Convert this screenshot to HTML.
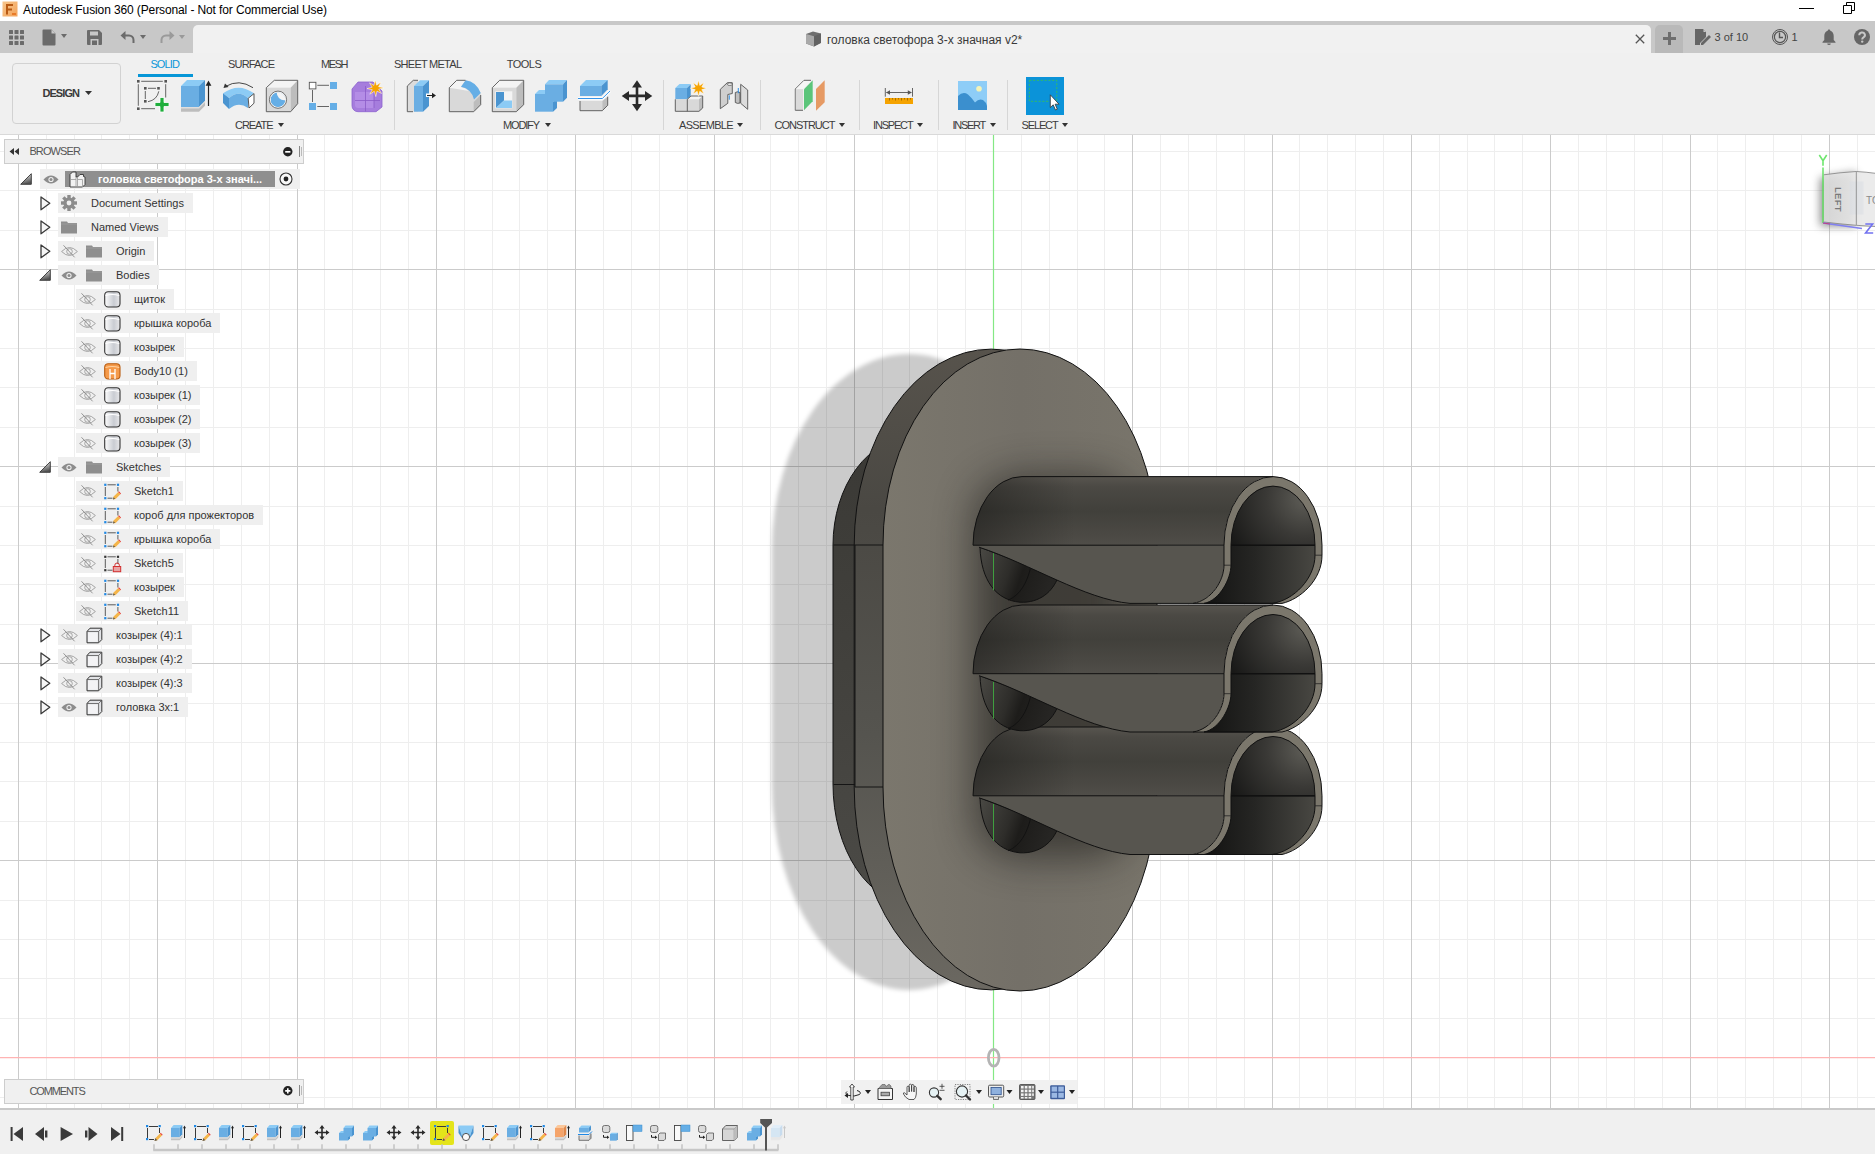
<!DOCTYPE html>
<html><head><meta charset="utf-8"><style>
html,body{margin:0;padding:0}
body{width:1875px;height:1154px;overflow:hidden;position:relative;font-family:"Liberation Sans",sans-serif;background:#fff}
.a{position:absolute}
.t{position:absolute;line-height:1;white-space:nowrap}
svg{position:absolute;overflow:visible}
</style></head><body>
<svg class="a" style="left:0;top:0" width="1875" height="1154" viewBox="0 0 1875 1154">
<path stroke="#eeeeee" stroke-width="1" fill="none" d="M46.5 134V1108 M74.5 134V1108 M101.5 134V1108 M129.5 134V1108 M185.5 134V1108 M213.5 134V1108 M241.5 134V1108 M269.5 134V1108 M324.5 134V1108 M352.5 134V1108 M380.5 134V1108 M408.5 134V1108 M464.5 134V1108 M492.5 134V1108 M519.5 134V1108 M547.5 134V1108 M603.5 134V1108 M631.5 134V1108 M659.5 134V1108 M687.5 134V1108 M742.5 134V1108 M770.5 134V1108 M798.5 134V1108 M826.5 134V1108 M882.5 134V1108 M909.5 134V1108 M937.5 134V1108 M965.5 134V1108 M1021.5 134V1108 M1049.5 134V1108 M1077.5 134V1108 M1104.5 134V1108 M1160.5 134V1108 M1188.5 134V1108 M1216.5 134V1108 M1244.5 134V1108 M1299.5 134V1108 M1327.5 134V1108 M1355.5 134V1108 M1383.5 134V1108 M1439.5 134V1108 M1467.5 134V1108 M1494.5 134V1108 M1522.5 134V1108 M1578.5 134V1108 M1606.5 134V1108 M1634.5 134V1108 M1662.5 134V1108 M1717.5 134V1108 M1745.5 134V1108 M1773.5 134V1108 M1801.5 134V1108 M1857.5 134V1108 M0 151.5H1875 M0 190.5H1875 M0 230.5H1875 M0 309.5H1875 M0 348.5H1875 M0 387.5H1875 M0 427.5H1875 M0 506.5H1875 M0 545.5H1875 M0 584.5H1875 M0 624.5H1875 M0 703.5H1875 M0 742.5H1875 M0 781.5H1875 M0 821.5H1875 M0 900.5H1875 M0 939.5H1875 M0 978.5H1875 M0 1018.5H1875 M0 1097.5H1875"/>
<path stroke="#cbcbcb" stroke-width="1" fill="none" d="M18.5 134V1108 M157.5 134V1108 M297.5 134V1108 M436.5 134V1108 M575.5 134V1108 M714.5 134V1108 M854.5 134V1108 M993.5 134V1108 M1132.5 134V1108 M1272.5 134V1108 M1411.5 134V1108 M1550.5 134V1108 M1690.5 134V1108 M1829.5 134V1108 M0 269.5H1875 M0 466.5H1875 M0 663.5H1875 M0 860.5H1875 M0 1057.5H1875"/>
</svg>
<!-- 10_axes.html -->
<svg class="a" style="left:0;top:0" width="1875" height="1154" viewBox="0 0 1875 1154">
<path d="M993.5 134V1108" stroke="#84e884" stroke-width="1.2" fill="none"/>
<path d="M0 1057.6H1875" stroke="#ffb3b3" stroke-width="1.3" fill="none"/>
<ellipse cx="993.7" cy="1057.7" rx="5.3" ry="8.4" fill="none" stroke="#b4b4b4" stroke-width="2.8"/>
</svg>
<!-- 20_model.py -->
<svg class="a" style="left:0;top:0" width="1875" height="1154" viewBox="0 0 1875 1154">
<defs>
<filter id="shb" x="-20%" y="-20%" width="140%" height="140%"><feGaussianBlur stdDeviation="2.2"/></filter>
<linearGradient id="bandg" x1="0" y1="349" x2="0" y2="991" gradientUnits="userSpaceOnUse">
 <stop offset="0" stop-color="#57534c"/><stop offset="0.25" stop-color="#4a4843"/><stop offset="0.6" stop-color="#55544f"/><stop offset="1" stop-color="#6b6861"/></linearGradient>
<linearGradient id="plateg" x1="0" y1="430" x2="0" y2="900" gradientUnits="userSpaceOnUse">
 <stop offset="0" stop-color="#3a3935"/><stop offset="0.5" stop-color="#42413d"/><stop offset="1" stop-color="#4b4a46"/></linearGradient>
<linearGradient id="faceg" x1="883" y1="0" x2="1157" y2="0" gradientUnits="userSpaceOnUse">
 <stop offset="0" stop-color="#7b776d"/><stop offset="0.5" stop-color="#747068"/><stop offset="1" stop-color="#79756b"/></linearGradient>
<radialGradient id="ao" cx="1030" cy="545" r="130" gradientUnits="userSpaceOnUse" gradientTransform="translate(1030 670) scale(0.75 1.45) translate(-1030 -670)">
 <stop offset="0" stop-color="#2a2925" stop-opacity="0.75"/><stop offset="0.55" stop-color="#2a2925" stop-opacity="0.35"/><stop offset="1" stop-color="#2a2925" stop-opacity="0"/></radialGradient>
<linearGradient id="interior" x1="0" y1="0" x2="1" y2="0.3">
 <stop offset="0" stop-color="#151514"/><stop offset="0.55" stop-color="#2e2e2b"/><stop offset="1" stop-color="#4f4e49"/></linearGradient>
<linearGradient id="hemi" x1="0" y1="0" x2="1" y2="0.25">
 <stop offset="0" stop-color="#4a4944"/><stop offset="0.45" stop-color="#2e2d2a"/><stop offset="0.62" stop-color="#1d1c1a"/><stop offset="1" stop-color="#262523"/></linearGradient>
</defs>
<path d="M772,550 A137,196 0 0 1 1046,550 V785 A137,205 0 0 1 772,785 Z" fill="#000" fill-opacity="0.205" filter="url(#shb)"/>
<path d="M833,545 A80,108 0 0 1 993,545 V784 A80,120 0 0 1 833,784 Z" fill="url(#plateg)" stroke="#111" stroke-width="1"/>
<path d="M854.2,545 A137,196 0 0 1 1128.2,545 V787 A137,203 0 0 1 854.2,787 Z" fill="url(#bandg)" stroke="#111" stroke-width="1"/>
<path d="M833.5 545H883M833.5 784.5H855M855 787H883M855 545V787" stroke="#151515" stroke-width="1" fill="none"/>
<path d="M883,545 A137,196 0 0 1 1157,545 V787 A137,204 0 0 1 883,787 Z" fill="url(#faceg)"/>
<clipPath id="fclip"><path d="M883,545 A137,196 0 0 1 1157,545 V787 A137,204 0 0 1 883,787 Z"/></clipPath>
<filter id="aob" x="-50%" y="-50%" width="200%" height="200%"><feGaussianBlur stdDeviation="20" color-interpolation-filters="sRGB"/></filter>
<g clip-path="url(#fclip)" opacity="0.62"><g filter="url(#aob)">
<path d="M975 520 Q975 478 1030 476 H1090 Q1130 478 1130 520 V815 Q1130 858 1090 858 H1030 Q975 858 975 815 Z" fill="#1d1c19"/>
</g></g>
<path d="M883,545 A137,196 0 0 1 1157,545 V787 A137,204 0 0 1 883,787 Z" fill="none" stroke="#111" stroke-width="1"/>
<linearGradient id="up2" x1="0" y1="727" x2="0" y2="795.8" gradientUnits="userSpaceOnUse">
<stop offset="0" stop-color="#58554f"/><stop offset="0.15" stop-color="#4b4944"/><stop offset="0.5" stop-color="#41403b"/><stop offset="0.85" stop-color="#4b4944"/><stop offset="1" stop-color="#504e49"/></linearGradient>
<linearGradient id="lf2" x1="973" y1="0" x2="1075" y2="0" gradientUnits="userSpaceOnUse"><stop offset="0" stop-color="#000" stop-opacity="0.32"/><stop offset="1" stop-color="#000" stop-opacity="0"/></linearGradient><path d="M980,797.8 C981,830.8 996,850.8 1020,852.8 C1040,853.8 1053,841.8 1058,827.8 Z" fill="url(#hemi)" stroke="#111" stroke-width="1"/><path d="M1031,816.8 C1027,833.8 1020,845.8 1008,850.8" stroke="#111" stroke-width="0.9" fill="none"/><path d="M993.5,803.8V840.8" stroke="#3f9f3f" stroke-width="1"/><path d="M973,795.8 A49,68.79999999999995 0 0 1 1022,727 H1273 A49,68.79999999999995 0 0 0 1224,795.8 Z" fill="url(#up2)"/><path d="M973,795.8 A49,68.79999999999995 0 0 1 1022,727 H1273 A49,68.79999999999995 0 0 0 1224,795.8 Z" fill="url(#lf2)"/><path d="M979,795.8 L979,797.8 C1030,814.3 1085,850.5 1130,854.5 H1193 C1212,851.5 1224,830.8 1224,815.8 V795.8 Z" fill="#57554f"/><path d="M1224,795.8 A49,68.79999999999995 0 0 1 1322,795.8 V805.8 C1322,830.8 1300,850.5 1282,854.5 H1193 C1212,851.5 1224,830.8 1224,815.8 Z" fill="#7b776c"/><radialGradient id="iu2" cx="1305" cy="749" r="85" gradientUnits="userSpaceOnUse"><stop offset="0" stop-color="#5e5d57"/><stop offset="0.45" stop-color="#3a3936"/><stop offset="1" stop-color="#181817"/></radialGradient><linearGradient id="il2" x1="1204" y1="0" x2="1318" y2="0" gradientUnits="userSpaceOnUse"><stop offset="0" stop-color="#121211"/><stop offset="0.45" stop-color="#262624"/><stop offset="1" stop-color="#4a4944"/></linearGradient><path d="M1231,795.8 H1315 V805.8 C1315,828.8 1294,851.5 1272,854.5 H1204 C1220,851.5 1231,828.8 1231,815.8 Z" fill="url(#il2)" stroke="#111" stroke-width="1"/><path d="M1231,795.8 A42,59.299999999999955 0 0 1 1315,795.8 Z" fill="url(#iu2)" stroke="#111" stroke-width="1"/><path d="M1224,815.8H1231M1315,805.8H1322" stroke="#222" stroke-width="0.8"/><path d="M1224,795.8 A49,68.79999999999995 0 0 1 1322,795.8 V805.8 C1322,830.8 1300,850.5 1282,854.5 H1193 C1212,851.5 1224,830.8 1224,815.8 Z" fill="none" stroke="#111" stroke-width="1"/><path d="M973,795.8 A49,68.79999999999995 0 0 1 1022,727 H1273" fill="none" stroke="#111" stroke-width="1"/><path d="M973,795.8H1224 M1231,795.8H1315" stroke="#111" stroke-width="1"/><path d="M979,797.8 C1030,814.3 1085,850.5 1130,854.5 H1193" fill="none" stroke="#111" stroke-width="1"/>
<linearGradient id="up1" x1="0" y1="605" x2="0" y2="673.7" gradientUnits="userSpaceOnUse">
<stop offset="0" stop-color="#58554f"/><stop offset="0.15" stop-color="#4b4944"/><stop offset="0.5" stop-color="#41403b"/><stop offset="0.85" stop-color="#4b4944"/><stop offset="1" stop-color="#504e49"/></linearGradient>
<linearGradient id="lf1" x1="973" y1="0" x2="1075" y2="0" gradientUnits="userSpaceOnUse"><stop offset="0" stop-color="#000" stop-opacity="0.32"/><stop offset="1" stop-color="#000" stop-opacity="0"/></linearGradient><path d="M980,675.7 C981,708.7 996,728.7 1020,730.7 C1040,731.7 1053,719.7 1058,705.7 Z" fill="url(#hemi)" stroke="#111" stroke-width="1"/><path d="M1031,694.7 C1027,711.7 1020,723.7 1008,728.7" stroke="#111" stroke-width="0.9" fill="none"/><path d="M993.5,681.7V718.7" stroke="#3f9f3f" stroke-width="1"/><path d="M973,673.7 A49,68.70000000000005 0 0 1 1022,605 H1273 A49,68.70000000000005 0 0 0 1224,673.7 Z" fill="url(#up1)"/><path d="M973,673.7 A49,68.70000000000005 0 0 1 1022,605 H1273 A49,68.70000000000005 0 0 0 1224,673.7 Z" fill="url(#lf1)"/><path d="M979,673.7 L979,675.7 C1030,692.2 1085,728 1130,732 H1193 C1212,729 1224,708.7 1224,693.7 V673.7 Z" fill="#57554f"/><path d="M1224,673.7 A49,68.70000000000005 0 0 1 1322,673.7 V683.7 C1322,708.7 1300,728 1282,732 H1193 C1212,729 1224,708.7 1224,693.7 Z" fill="#7b776c"/><radialGradient id="iu1" cx="1305" cy="627" r="85" gradientUnits="userSpaceOnUse"><stop offset="0" stop-color="#5e5d57"/><stop offset="0.45" stop-color="#3a3936"/><stop offset="1" stop-color="#181817"/></radialGradient><linearGradient id="il1" x1="1204" y1="0" x2="1318" y2="0" gradientUnits="userSpaceOnUse"><stop offset="0" stop-color="#121211"/><stop offset="0.45" stop-color="#262624"/><stop offset="1" stop-color="#4a4944"/></linearGradient><path d="M1231,673.7 H1315 V683.7 C1315,706.7 1294,729 1272,732 H1204 C1220,729 1231,706.7 1231,693.7 Z" fill="url(#il1)" stroke="#111" stroke-width="1"/><path d="M1231,673.7 A42,59.200000000000045 0 0 1 1315,673.7 Z" fill="url(#iu1)" stroke="#111" stroke-width="1"/><path d="M1224,693.7H1231M1315,683.7H1322" stroke="#222" stroke-width="0.8"/><path d="M1224,673.7 A49,68.70000000000005 0 0 1 1322,673.7 V683.7 C1322,708.7 1300,728 1282,732 H1193 C1212,729 1224,708.7 1224,693.7 Z" fill="none" stroke="#111" stroke-width="1"/><path d="M973,673.7 A49,68.70000000000005 0 0 1 1022,605 H1273" fill="none" stroke="#111" stroke-width="1"/><path d="M973,673.7H1224 M1231,673.7H1315" stroke="#111" stroke-width="1"/><path d="M979,675.7 C1030,692.2 1085,728 1130,732 H1193" fill="none" stroke="#111" stroke-width="1"/>
<linearGradient id="up0" x1="0" y1="476.6" x2="0" y2="545.2" gradientUnits="userSpaceOnUse">
<stop offset="0" stop-color="#58554f"/><stop offset="0.15" stop-color="#4b4944"/><stop offset="0.5" stop-color="#41403b"/><stop offset="0.85" stop-color="#4b4944"/><stop offset="1" stop-color="#504e49"/></linearGradient>
<linearGradient id="lf0" x1="973" y1="0" x2="1075" y2="0" gradientUnits="userSpaceOnUse"><stop offset="0" stop-color="#000" stop-opacity="0.32"/><stop offset="1" stop-color="#000" stop-opacity="0"/></linearGradient><path d="M980,547.2 C981,580.2 996,600.2 1020,602.2 C1040,603.2 1053,591.2 1058,577.2 Z" fill="url(#hemi)" stroke="#111" stroke-width="1"/><path d="M1031,566.2 C1027,583.2 1020,595.2 1008,600.2" stroke="#111" stroke-width="0.9" fill="none"/><path d="M993.5,553.2V590.2" stroke="#3f9f3f" stroke-width="1"/><path d="M973,545.2 A49,68.60000000000002 0 0 1 1022,476.6 H1273 A49,68.60000000000002 0 0 0 1224,545.2 Z" fill="url(#up0)"/><path d="M973,545.2 A49,68.60000000000002 0 0 1 1022,476.6 H1273 A49,68.60000000000002 0 0 0 1224,545.2 Z" fill="url(#lf0)"/><path d="M979,545.2 L979,547.2 C1030,563.7 1085,599.4 1130,603.4 H1193 C1212,600.4 1224,580.2 1224,565.2 V545.2 Z" fill="#57554f"/><path d="M1224,545.2 A49,68.60000000000002 0 0 1 1322,545.2 V555.2 C1322,580.2 1300,599.4 1282,603.4 H1193 C1212,600.4 1224,580.2 1224,565.2 Z" fill="#7b776c"/><radialGradient id="iu0" cx="1305" cy="498.6" r="85" gradientUnits="userSpaceOnUse"><stop offset="0" stop-color="#5e5d57"/><stop offset="0.45" stop-color="#3a3936"/><stop offset="1" stop-color="#181817"/></radialGradient><linearGradient id="il0" x1="1204" y1="0" x2="1318" y2="0" gradientUnits="userSpaceOnUse"><stop offset="0" stop-color="#121211"/><stop offset="0.45" stop-color="#262624"/><stop offset="1" stop-color="#4a4944"/></linearGradient><path d="M1231,545.2 H1315 V555.2 C1315,578.2 1294,600.4 1272,603.4 H1204 C1220,600.4 1231,578.2 1231,565.2 Z" fill="url(#il0)" stroke="#111" stroke-width="1"/><path d="M1231,545.2 A42,59.10000000000002 0 0 1 1315,545.2 Z" fill="url(#iu0)" stroke="#111" stroke-width="1"/><path d="M1224,565.2H1231M1315,555.2H1322" stroke="#222" stroke-width="0.8"/><path d="M1224,545.2 A49,68.60000000000002 0 0 1 1322,545.2 V555.2 C1322,580.2 1300,599.4 1282,603.4 H1193 C1212,600.4 1224,580.2 1224,565.2 Z" fill="none" stroke="#111" stroke-width="1"/><path d="M973,545.2 A49,68.60000000000002 0 0 1 1022,476.6 H1273" fill="none" stroke="#111" stroke-width="1"/><path d="M973,545.2H1224 M1231,545.2H1315" stroke="#111" stroke-width="1"/><path d="M979,547.2 C1030,563.7 1085,599.4 1130,603.4 H1193" fill="none" stroke="#111" stroke-width="1"/>
</svg>
<!-- 30_viewcube.html -->
<svg class="a" style="left:1780px;top:140px" width="95" height="110" viewBox="1780 140 95 110">
<defs>
<filter id="vcb" x="-50%" y="-50%" width="200%" height="200%"><feGaussianBlur stdDeviation="4" color-interpolation-filters="sRGB"/></filter>
<linearGradient id="vcf" x1="1823" y1="0" x2="1856" y2="0" gradientUnits="userSpaceOnUse"><stop offset="0" stop-color="#dcdcdc"/><stop offset="1" stop-color="#ebebeb"/></linearGradient>
</defs>
<g opacity="0.55" filter="url(#vcb)"><path d="M1820 178L1856 172V226L1820 226Z" fill="#333"/></g>
<path d="M1823.8 174.8Q1840 172.5 1856.3 171.5V225.3Q1840 224 1823.8 222Z" fill="url(#vcf)" opacity="0.9"/>
<path d="M1856.3 171.5Q1866 172 1876 173.4V227H1856.3Z" fill="#e9e9e9" opacity="0.9"/>
<rect x="1849.5" y="181.5" width="14" height="33" fill="#d8dbe2" opacity="0.45"/>
<path d="M1823.8 174.8Q1840 172.5 1856.3 171.5Q1866 172 1876 173.4M1823.8 222Q1840 224 1856.3 225.3Q1866 226 1876 226.5M1856.3 171.5V225.3" fill="none" stroke="#8c8c8c" stroke-width="0.9"/>
<text x="0" y="0" transform="translate(1835 187) rotate(90)" font-family="Liberation Sans" font-weight="bold" font-size="9.5" fill="#7a7a7a" letter-spacing="0.3">LEFT</text>
<text x="1866" y="204" font-family="Liberation Sans" font-size="10" fill="#8a8a8a">TO</text>
<path d="M1823 167.5V223" stroke="#5ee05e" stroke-width="1.4"/>
<path d="M1823 223L1862 228.5" stroke="#8080f2" stroke-width="1.4"/>
<path d="M1823 223L1830 224" stroke="#c04080" stroke-width="1.2"/>
<path d="M1819.3 155L1823 160.8L1826.7 155M1823 160.8V165.8" stroke="#6ee66e" stroke-width="1.6" fill="none"/>
<path d="M1865.3 224H1872.6L1865.6 233H1873.2" stroke="#7272f0" stroke-width="1.6" fill="none"/>
</svg>
<!-- 40_chrome.py -->
<div class="a" style="left:0;top:0;width:1875px;height:21px;background:#fff"></div>
<svg style="left:2px;top:1px" width="16" height="16" viewBox="0 0 16 16">
<defs><linearGradient id="fg" x1="0" y1="0" x2="1" y2="1"><stop offset="0" stop-color="#f7c58b"/><stop offset="1" stop-color="#f3a35a"/></linearGradient></defs>
<rect x="0.5" y="0.5" width="15" height="15" fill="url(#fg)"/>
<path d="M4 3h7v2h-5v2.5h4v2h-4v4h-2z" fill="#b85a14"/>
<rect x="10" y="12" width="4" height="2" fill="#e87b2a"/>
</svg>
<div class="t" style="left:23px;top:3.54px;font-size:12px;color:#000;letter-spacing:-0.113px;">Autodesk Fusion 360 (Personal - Not for Commercial Use)</div>

<div class="a" style="left:1799px;top:8px;width:15px;height:1px;background:#000"></div>
<svg style="left:1843px;top:2px" width="12" height="12" viewBox="0 0 12 12"><path d="M0.5 3.5h8v8h-8z M3.5 3.5v-3h8v8h-3" fill="none" stroke="#000" stroke-width="1"/></svg>
<div class="a" style="left:0;top:21px;width:1875px;height:32px;background:#c8c8c8"></div>
<svg style="left:9px;top:30px" width="15" height="15" viewBox="0 0 15 15" fill="#6b6b6b">
<rect x="0" y="0" width="4" height="4" rx="0.5"/><rect x="5.5" y="0" width="4" height="4" rx="0.5"/><rect x="11" y="0" width="4" height="4" rx="0.5"/>
<rect x="0" y="5.5" width="4" height="4" rx="0.5"/><rect x="5.5" y="5.5" width="4" height="4" rx="0.5"/><rect x="11" y="5.5" width="4" height="4" rx="0.5"/>
<rect x="0" y="11" width="4" height="4" rx="0.5"/><rect x="5.5" y="11" width="4" height="4" rx="0.5"/><rect x="11" y="11" width="4" height="4" rx="0.5"/>
</svg>
<svg style="left:42px;top:29px" width="30" height="17" viewBox="0 0 30 17">
<path d="M0.5 1.5a1 1 0 0 1 1-1h8l4 4v11a1 1 0 0 1-1 1h-11a1 1 0 0 1-1-1z" fill="#6b6b6b"/>
<path d="M9.5 0.5v4h4" fill="#c8c8c8"/>
<path d="M19 5h6l-3 4z" fill="#6b6b6b"/>
</svg>
<svg style="left:87px;top:30px" width="15" height="15" viewBox="0 0 15 15">
<path d="M0 1a1 1 0 0 1 1-1h11l3 3v11a1 1 0 0 1-1 1h-13a1 1 0 0 1-1-1z" fill="#6b6b6b"/>
<rect x="3" y="1.5" width="8" height="4" fill="#c8c8c8"/>
<rect x="3.5" y="9" width="8" height="6" fill="#c8c8c8"/><rect x="5" y="10.5" width="5" height="4.5" fill="#6b6b6b"/>
</svg>
<svg style="left:120px;top:30px" width="30" height="14" viewBox="0 0 30 14">
<path d="M2 5.5h7a4.5 4.5 0 0 1 4.5 4.5v3" fill="none" stroke="#6b6b6b" stroke-width="2"/>
<path d="M0.5 5.5l5-4.5v9z" fill="#6b6b6b"/>
<path d="M20 5h6l-3 4z" fill="#6b6b6b"/>
</svg>
<svg style="left:160px;top:30px" width="30" height="14" viewBox="0 0 30 14">
<path d="M13 5.5h-7a4.5 4.5 0 0 0-4.5 4.5v3" fill="none" stroke="#9a9a9a" stroke-width="2"/>
<path d="M14.5 5.5l-5-4.5v9z" fill="#9a9a9a"/>
<path d="M19 5h6l-3 4z" fill="#9a9a9a"/>
</svg>
<div class="a" style="left:193px;top:25px;width:1458px;height:28px;background:#f1f1f1;border-radius:5px 5px 0 0"></div>
<svg style="left:805px;top:31px" width="17" height="16" viewBox="0 0 17 16">
<path d="M1 3l7-2.5 8 2v9l-7 4-8-3z" fill="#6f6f6f"/>
<path d="M1 3l8 2.2v10.3l-8-3z" fill="#a9a9a9"/>
<path d="M9 5.2l7-2.7v9.5l-7 3.5z" fill="#626262"/>
</svg>
<div class="t" style="left:827px;top:33.84px;font-size:12px;color:#3a3a3a;">головка светофора 3-х значная v2*</div>

<svg style="left:1635px;top:34px" width="10" height="10" viewBox="0 0 10 10"><path d="M0.8 0.8L9.2 9.2M9.2 0.8L0.8 9.2" stroke="#555" stroke-width="1.3"/></svg>
<div class="a" style="left:1655px;top:25px;width:28px;height:28px;background:#b9b9b9;border-radius:5px 5px 0 0"></div>
<div class="a" style="left:1663px;top:37px;width:13px;height:3px;background:#6e6e6e"></div>
<div class="a" style="left:1668px;top:32px;width:3px;height:13px;background:#6e6e6e"></div>
<svg style="left:1695px;top:29px" width="17" height="16" viewBox="0 0 17 16">
<path d="M0 0h8l3 3v5l-6 6v2h-5z" fill="#666"/>
<path d="M6 14l8-8 2 2-8 8h-2z" fill="#666"/>
<path d="M8.5 0.5v2.5h2.5" fill="#c8c8c8"/>
</svg>
<div class="t" style="left:1714.5px;top:31.69px;font-size:11px;color:#444;">3 of 10</div>

<svg style="left:1772px;top:29px" width="16" height="16" viewBox="0 0 16 16">
<circle cx="8" cy="8" r="7.5" fill="none" stroke="#555" stroke-width="1"/>
<circle cx="8" cy="8" r="6.2" fill="#555"/>
<circle cx="8" cy="8" r="5" fill="#c8c8c8"/>
<path d="M7.5 3.5v5h3.5" fill="none" stroke="#555" stroke-width="1.4"/>
</svg>
<div class="t" style="left:1791.5px;top:31.69px;font-size:11px;color:#444;">1</div>

<svg style="left:1822px;top:29px" width="14" height="16" viewBox="0 0 14 16">
<path d="M7 0.5c-1 0-1.3 0.6-1.3 1.3C3.3 2.5 2.3 4.5 2.3 7v4L0.5 13v0.8h13V13l-1.8-2V7c0-2.5-1-4.5-3.4-5.2C8.3 1.1 8 0.5 7 0.5z" fill="#666"/>
<path d="M5.2 14.5h3.6a1.8 1.6 0 0 1-3.6 0z" fill="#666"/>
</svg>
<svg style="left:1854px;top:29px" width="16" height="16" viewBox="0 0 16 16">
<circle cx="8" cy="8" r="8" fill="#666"/>
<path d="M5.3 6.2a2.8 2.6 0 1 1 4.2 2.2c-1 0.6-1.3 1-1.3 2" fill="none" stroke="#c8c8c8" stroke-width="2"/>
<circle cx="8.2" cy="12.6" r="1.2" fill="#c8c8c8"/>
</svg>
<div class="a" style="left:0;top:53px;width:1875px;height:82px;background:#f0f0f0;border-bottom:1px solid #d9d9d9;box-sizing:border-box"></div>
<div class="a" style="left:12px;top:63px;width:109px;height:61px;border:1px solid #d2d2d2;border-radius:4px;box-sizing:border-box"></div>
<div class="t" style="left:42.4px;top:88.49px;font-size:11px;color:#3a3a3a;font-weight:bold;letter-spacing:-0.915px;">DESIGN</div>

<svg style="left:85px;top:91px" width="7" height="5" viewBox="0 0 7 5"><path d="M0 0h7l-3.5 4z" fill="#333"/></svg>
<div class="t" style="left:150.4px;top:58.59px;font-size:11px;color:#0a96d8;letter-spacing:-0.853px;">SOLID</div>

<div class="t" style="left:228px;top:58.59px;font-size:11px;color:#3c3c3c;letter-spacing:-0.826px;">SURFACE</div>

<div class="t" style="left:321px;top:58.59px;font-size:11px;color:#3c3c3c;letter-spacing:-1.427px;">MESH</div>

<div class="t" style="left:394px;top:58.59px;font-size:11px;color:#3c3c3c;letter-spacing:-0.739px;">SHEET METAL</div>

<div class="t" style="left:506.8px;top:58.59px;font-size:11px;color:#3c3c3c;letter-spacing:-0.522px;">TOOLS</div>

<div class="a" style="left:138px;top:74px;width:55px;height:3px;background:#0696d7"></div>
<div class="t" style="left:235px;top:119.89px;font-size:11px;color:#3c3c3c;letter-spacing:-1.041px;">CREATE</div>

<svg style="left:277.5px;top:123px" width="6" height="4" viewBox="0 0 6 4"><path d="M0 0h6l-3 4z" fill="#333"/></svg>
<div class="t" style="left:503px;top:119.89px;font-size:11px;color:#3c3c3c;letter-spacing:-1.155px;">MODIFY</div>

<svg style="left:545px;top:123px" width="6" height="4" viewBox="0 0 6 4"><path d="M0 0h6l-3 4z" fill="#333"/></svg>
<div class="t" style="left:679px;top:119.89px;font-size:11px;color:#3c3c3c;letter-spacing:-0.672px;">ASSEMBLE</div>

<svg style="left:737px;top:123px" width="6" height="4" viewBox="0 0 6 4"><path d="M0 0h6l-3 4z" fill="#333"/></svg>
<div class="t" style="left:774.6px;top:119.89px;font-size:11px;color:#3c3c3c;letter-spacing:-1.031px;">CONSTRUCT</div>

<svg style="left:839px;top:123px" width="6" height="4" viewBox="0 0 6 4"><path d="M0 0h6l-3 4z" fill="#333"/></svg>
<div class="t" style="left:873px;top:119.89px;font-size:11px;color:#3c3c3c;letter-spacing:-1.179px;">INSPECT</div>

<svg style="left:917px;top:123px" width="6" height="4" viewBox="0 0 6 4"><path d="M0 0h6l-3 4z" fill="#333"/></svg>
<div class="t" style="left:952.4px;top:119.89px;font-size:11px;color:#3c3c3c;letter-spacing:-1.248px;">INSERT</div>

<svg style="left:990px;top:123px" width="6" height="4" viewBox="0 0 6 4"><path d="M0 0h6l-3 4z" fill="#333"/></svg>
<div class="t" style="left:1021.5px;top:119.89px;font-size:11px;color:#3c3c3c;letter-spacing:-1.138px;">SELECT</div>

<svg style="left:1062px;top:123px" width="6" height="4" viewBox="0 0 6 4"><path d="M0 0h6l-3 4z" fill="#333"/></svg>
<div class="a" style="left:393.5px;top:80px;width:1px;height:50px;background:#d6d6d6"></div>
<div class="a" style="left:662.5px;top:80px;width:1px;height:50px;background:#d6d6d6"></div>
<div class="a" style="left:759.5px;top:80px;width:1px;height:50px;background:#d6d6d6"></div>
<div class="a" style="left:858.5px;top:80px;width:1px;height:50px;background:#d6d6d6"></div>
<div class="a" style="left:937.5px;top:80px;width:1px;height:50px;background:#d6d6d6"></div>
<div class="a" style="left:1006.5px;top:80px;width:1px;height:50px;background:#d6d6d6"></div>
<!-- 41_ticons.html -->
<svg style="left:134px;top:76px" width="260" height="40" viewBox="0 0 260 40">
<g fill="#555">
<rect x="3" y="4" width="2.6" height="2.6"/><rect x="30.4" y="4" width="2.6" height="2.6"/><rect x="3" y="31.4" width="2.6" height="2.6"/>
<rect x="10" y="11" width="2.6" height="2.6"/><rect x="23.2" y="11" width="2.6" height="2.6"/><rect x="10" y="24" width="2.6" height="2.6"/>
</g>
<g stroke="#555" stroke-width="0.9" fill="none">
<path d="M7.2 5.3H28.8M4.3 8.2V29.8M7.2 32.7H21M31.7 8.2V21.5M14 12.3H22M11.3 15V23M24.8 15.3Q23 24 14 25.7"/>
</g>
<path d="M26 21.5h4v5h5v4h-5v5.5h-4v-5.5h-5v-4h5z" fill="#1fae3c" stroke="#fff" stroke-width="0.8"/>
<!-- extrude -->
<path d="M47 10L53 4.1H71L65 10Z" fill="#8ccbf5"/>
<path d="M47 10H65V31H47Z" fill="#6aaee3"/>
<path d="M65 10L71 4.1V25L65 31Z" fill="#4a94d0"/>
<path d="M47 31H65L71 25V29.7L65 35.7H47Z" fill="#bdbdbd"/>
<path d="M47 31H65L71 25V26.5L65 32.5H47Z" fill="#dedede"/>
<path d="M74.5 30V8" stroke="#222" stroke-width="1.2"/>
<path d="M71.6 9.8L74.5 4.6L77.4 9.8Z" fill="#222"/>
<!-- revolve -->
<path d="M91.5 10.5Q105 2.5 119 11.7" stroke="#333" stroke-width="0.9" fill="none"/>
<path d="M89.5 12L91 7.6L94.6 11Z" fill="#333"/>
<path d="M89 17.3Q104.5 6 120 17.3L114 22Q104.5 13.5 95 22Z" fill="#8ccbf5"/>
<path d="M95 22Q104.5 13.5 114 22V32Q104.5 25 95 33Z" fill="#6aaee3"/>
<path d="M89 17.3L95 22V33L89 27Z" fill="#4a94d0"/>
<path d="M114.2 22.3L120 17.6V27.2L115 32Z" fill="#fff" stroke="#444" stroke-width="0.9"/>
</svg>
<svg style="left:262px;top:76px" width="130" height="40" viewBox="0 0 130 40">
<path d="M4.3 11.7L12.3 4.3H35.7L28.7 11.7Z" fill="#f4f4f4"/>
<path d="M4.3 11.7H28.7V35.7H4.3Z" fill="#d9d9d9"/>
<path d="M28.7 11.7L35.7 4.3V27.7L28.7 35.7Z" fill="#bdbdbd"/>
<path d="M4.3 35.7V11.7L12.3 4.3H35.7V27.7L28.7 35.7Z" fill="none" stroke="#555" stroke-width="0.9"/>
<circle cx="16" cy="23.7" r="8.6" fill="#f4f4f4" stroke="#555" stroke-width="0.8"/>
<clipPath id="hc"><circle cx="16" cy="23.7" r="7.4"/></clipPath>
<g clip-path="url(#hc)"><circle cx="16" cy="23.7" r="7.4" fill="#65aee6"/><circle cx="22.3" cy="16.6" r="7.6" fill="#f4f4f4"/></g>
<rect x="47.3" y="6.3" width="6.6" height="6.6" fill="#fff" stroke="#555" stroke-width="0.9"/>
<rect x="68" y="6" width="7" height="7" fill="#65aee6"/>
<rect x="47" y="27" width="7" height="7" fill="#65aee6"/>
<rect x="68" y="27" width="7" height="7" fill="#65aee6"/>
<path d="M55.3 9.3H67M50.5 14V26M55.3 30.5H67" stroke="#555" stroke-width="0.9"/>
<path d="M96 6H111L120 15V31L114 35.7H96A6 6 0 0 1 90 29.7V13Z" fill="#a67ddd"/>
<path d="M93 16H112V32H96A3 3 0 0 1 93 29Z" fill="#b48de6"/>
<path d="M93 24.5H118M103.5 10V35.5M112 16V32" stroke="#8a5cc8" stroke-width="0.8" fill="none"/>
<path d="M96 6H111L120 15V31L114 35.7H96A6 6 0 0 1 90 29.7V13Z" fill="none" stroke="#8c62ce" stroke-width="0.8"/>
<path d="M113.3 4L114.6 9.2L119 6.2L116.6 10.8L121.9 11.7L116.7 13.2L119.6 17.5L115 15.1L113.8 20.6L112.3 15.3L107.8 18.2L110.3 13.7L105 12.6L110.2 11.2L107.4 6.8L111.9 9.4Z" fill="#f5a300" stroke="#fff" stroke-width="0.5"/>
</svg>
<svg style="left:403px;top:76px" width="260" height="40" viewBox="0 0 260 40">
<!-- press pull -->
<path d="M4.3 35.7V10L10.3 4.3H15V35.7Z" fill="#dcdcdc"/>
<path d="M10 35.7H4.3V10L10.3 4.3H15" fill="none" stroke="#555" stroke-width="0.9"/>
<path d="M11 10L17 4.3H26L20 10Z" fill="#8ccbf5"/>
<path d="M11 10H20V35.7H11Z" fill="#6aaee3"/>
<path d="M20 10L26 4.3V30L20 35.7Z" fill="#4a94d0"/>
<rect x="23" y="17.5" width="6" height="3.5" fill="#fff"/>
<path d="M24 19.5H30" stroke="#222" stroke-width="1.1"/>
<path d="M29 16.8L33 19.5L29 22.2Z" fill="#222"/>
<!-- fillet -->
<path d="M46.3 35.7V11.7L53.7 4.3H62.5Q73 7 77.7 17V28.7L70.7 35.7Z" fill="#d9d9d9"/>
<path d="M70.7 35.7V26L77.7 19V28.7Z" fill="#bdbdbd"/>
<path d="M46.3 11.7L53.7 4.3H62.5L58 11Q62 11.5 66 15Z" fill="#f4f4f4"/>
<path d="M58 10.8L62.7 4.3Q73 5.5 77.7 17L71 23.5Q68.5 13 58 10.8Z" fill="#65aee6"/>
<path d="M46.3 35.7V11.7L53.7 4.3H62.5M77.7 19V28.7L70.7 35.7H46.3" fill="none" stroke="#555" stroke-width="0.9"/>
<!-- shell -->
<path d="M89.3 11.7L96.7 4.3H120.7L113.3 11.7Z" fill="#f4f4f4"/>
<path d="M89.3 11.7H113.3V35.7H89.3Z" fill="#d9d9d9"/>
<path d="M113.3 11.7L120.7 4.3V28.7L113.3 35.7Z" fill="#bdbdbd"/>
<rect x="92.3" y="15.3" width="17" height="17" fill="#f4f4f4"/>
<path d="M93 16H101V24.5L93 32Z" fill="#4a94d0"/>
<path d="M93 32L101 24.5H109V32Z" fill="#8ccbf5"/>
<path d="M89.3 35.7V11.7L96.7 4.3H120.7V28.7L113.3 35.7Z" fill="none" stroke="#555" stroke-width="0.9"/>
</svg>
<svg style="left:530px;top:76px" width="130" height="40" viewBox="0 0 130 40">
<!-- combine -->
<path d="M5 18L9 14.1H15V18Z" fill="#8ccbf5"/>
<path d="M5 18H23V35.7H5Z" fill="#6aaee3"/>
<path d="M23 25.7L27 21.7V32L23 35.7Z" fill="#4a94d0"/>
<path d="M15 8.3L19 4.1H37L33 8.3Z" fill="#8ccbf5"/>
<path d="M15 8.3H33V25.7H15Z" fill="#6aaee3"/>
<path d="M33 8.3L37 4.1V21.7L33 25.7Z" fill="#4a94d0"/>
<!-- split -->
<path d="M50 10L56 4.1H77.7L71.3 10Z" fill="#8ccbf5"/>
<path d="M50 10H71.3V20H50Z" fill="#6aaee3"/>
<path d="M71.3 10L77.7 4.1V13.3L71.3 20Z" fill="#4a94d0"/>
<path d="M48 22.5H72.3L80 15" stroke="#fff" stroke-width="2.6" fill="none"/>
<path d="M48 22.5H72.3L80 15" stroke="#1e88e5" stroke-width="0.9" fill="none"/>
<path d="M50 25H72.3V34.7H50Z" fill="#d9d9d9"/>
<path d="M72.3 25L77.7 20.7V29.3L72.3 34.7Z" fill="#bdbdbd"/>
<path d="M50 25V34.7H72.3L77.7 29.3V20.7" fill="none" stroke="#555" stroke-width="0.9"/>
<!-- move -->
<path d="M107 9V31M96 19.9H118" stroke="#2a2a2a" stroke-width="2.6"/>
<path d="M107 4.3L112 11.6H102Z M107 35.3L112 28H102Z M91.7 19.9L99 14.9V24.9Z M122.3 19.9L115 14.9V24.9Z" fill="#2a2a2a"/>
</svg>
<svg style="left:670px;top:76px" width="130" height="40" viewBox="0 0 130 40">
<path d="M5.3 12L9.5 8H20.7L17 12Z" fill="#8ccbf5"/>
<path d="M5.3 12H17V23.3H5.3Z" fill="#6aaee3"/>
<path d="M17 12L20.7 8.3V20L17 23.3Z" fill="#4a94d0"/>
<path d="M17.3 23.3L21 20H32.7L29 23.3Z" fill="#f4f4f4"/>
<path d="M5.3 23.3H29V35.3H5.3Z" fill="#d9d9d9"/>
<path d="M29 23.3L32.7 20V32L29 35.3Z" fill="#bdbdbd"/>
<path d="M5.3 23.3V35.3H29L32.7 32V20H21L17.3 23.3V35.3" fill="none" stroke="#555" stroke-width="0.9"/>
<path d="M28.5 4.3L29.8 9.4L34 6.6L31.8 11L36.6 12.3L31.8 13.6L34 18L29.8 15.2L28.5 20.3L27.2 15.2L23 18L25.2 13.6L20.4 12.3L25.2 11L23 6.6L27.2 9.4Z" fill="#f5a300" stroke="#fff" stroke-width="0.5"/>
<!-- joint -->
<path d="M50.3 32.7V13.3L57.3 6.7H62.3V17.5L57.8 18.5V27.3Z" fill="#cfcfcf" stroke="#555" stroke-width="0.9"/>
<ellipse cx="59.8" cy="8.2" rx="2.5" ry="1.3" fill="#eee" stroke="#555" stroke-width="0.7"/>
<path d="M59.3 19.3V23.7" stroke="#1e88e5" stroke-width="0.9"/>
<path d="M70.7 8.3L77.7 14V33.3L70.7 27.3Z" fill="#dcdcdc" stroke="#555" stroke-width="0.9"/>
<path d="M65.3 16.5Q67.5 15 70 16.5V27Q67.5 28 65.3 26.5Z" fill="#c0c0c0" stroke="#555" stroke-width="0.9"/>
<path d="M68.3 12V17.3" stroke="#1e88e5" stroke-width="0.9"/>
</svg>
<svg style="left:790px;top:76px" width="130" height="40" viewBox="0 0 130 40">
<path d="M5.3 34.3V13L14 4.3H21" fill="none" stroke="#555" stroke-width="0.9"/>
<path d="M5.8 13.2H13V34H5.8Z" fill="#dadada"/>
<path d="M6 13L14 5H21L13 13Z" fill="#f6f6f6"/>
<path d="M5.3 34.3H13" stroke="#555" stroke-width="0.9"/>
<path d="M14 13.3L22.7 4.3V25.3L14 34.3Z" fill="#5bc57a"/>
<path d="M26 13L34.7 4.3V26.3L26 34.7Z" fill="#e69a64"/>
<!-- inspect -->
<path d="M95.3 12V20.7M122.5 12V20.7M96.5 16.5H121.3" stroke="#555" stroke-width="0.9"/>
<path d="M96 16.5L100 14.2V18.8Z M121.8 16.5L117.8 14.2V18.8Z" fill="#555"/>
<rect x="95" y="22" width="28" height="6" fill="#f5a300"/>
<path d="M99.5 22V24.5M102.5 22V23.5M105.5 22V24.5M108.5 22V23.5M111.5 22V24.5M114.5 22V23.5M117.5 22V24.5M120.5 22V23.5" stroke="#8a5a00" stroke-width="0.7"/>
</svg>
<svg style="left:958px;top:81px" width="30" height="30" viewBox="0 0 30 30">
<rect x="0" y="0" width="29" height="29" fill="#8ecdf7"/>
<path d="M0 15Q5 10 10 13.5Q14 17 17 21.5Q21 17 25 19Q28 21 29 25V29H0Z" fill="#3b8fce"/>
<circle cx="21" cy="7.8" r="2.8" fill="#f3f3b8"/>
</svg>
<svg style="left:1026px;top:77px" width="38" height="38" viewBox="0 0 38 38">
<rect x="0" y="0" width="38" height="38" fill="#0b93d9"/>
<rect x="3.3" y="3.3" width="27.5" height="21" fill="none" stroke="#39c05a" stroke-width="0.9" stroke-dasharray="2.2 1.6"/>
<path d="M24.3 17.8V30.5L27.2 27.8L29.5 33L31.3 32.2L29.1 27.2H33Z" fill="#fff" stroke="#333" stroke-width="0.8"/>
</svg>
<!-- 50_browser.py -->
<div class="a" style="left:4px;top:139px;width:300px;height:25px;background:#f0f0f0;border:1px solid #cdcdcd;box-sizing:border-box"></div>
<svg style="left:9px;top:147px" width="11" height="9" viewBox="0 0 11 9"><path d="M0.5 4.5L5 1V8Z M5.5 4.5L10 1V8Z" fill="#333"/></svg>
<div class="t" style="left:29.4px;top:145.69px;font-size:11px;color:#555;letter-spacing:-0.873px;">BROWSER</div>

<svg style="left:283px;top:147px" width="10" height="10" viewBox="0 0 10 10"><circle cx="4.8" cy="4.8" r="4.7" fill="#222"/><rect x="2.2" y="4" width="5.2" height="1.7" fill="#fff"/></svg>
<div class="a" style="left:299px;top:146px;width:1px;height:11px;background:#888"></div><div class="a" style="left:301px;top:147px;width:1px;height:9px;background:#bbb"></div>
<div class="a" style="left:40px;top:169px;width:260px;height:20px;background:#efefef"></div>
<div class="a" style="left:65px;top:171px;width:210px;height:16px;background:#8f8f8f"></div>
<svg style="left:20px;top:173px" width="12" height="12" viewBox="0 0 12 12"><defs><linearGradient id="tg0" x1="0" y1="0" x2="0.3" y2="1"><stop offset="0" stop-color="#fff"/><stop offset="1" stop-color="#555"/></linearGradient></defs><path d="M0.7 11.3L11.3 0.7V11.3Z" fill="url(#tg0)" stroke="#333" stroke-width="0.9" stroke-linejoin="round"/></svg>
<svg style="left:43px;top:173.5px" width="16" height="11" viewBox="0 0 16 11"><path d="M0.5 5.5Q8 -2.5 15.5 5.5Q8 13.5 0.5 5.5Z" fill="#8c8c8c"/><circle cx="8" cy="5.5" r="2.6" fill="#f0f0f0"/><circle cx="8" cy="5.5" r="1.5" fill="#8c8c8c"/></svg>
<svg style="left:69px;top:171px" width="17" height="17" viewBox="0 0 17 17"><path d="M1 16V3.5L3.5 1H7V6H8.5L11 3.5H14.5V5.5L16 6V13.5L13.5 16Z" fill="#f2f2f2" stroke="#333" stroke-width="0.9"/><path d="M7 6V16M1 8.5H7M8.5 6V16M8.5 8.5H13.5V16" fill="none" stroke="#999" stroke-width="0.8"/></svg>
<div class="t" style="left:98px;top:173.69px;font-size:11px;color:#fff;font-weight:bold;">головка светофора 3-х значі...</div>

<svg style="left:279px;top:172px" width="14" height="14" viewBox="0 0 14 14"><circle cx="7" cy="7" r="6" fill="#f8f8f8" stroke="#333" stroke-width="1.1"/><circle cx="7" cy="7" r="2.4" fill="#222"/></svg>
<div class="a" style="left:58px;top:193px;width:134.9px;height:20px;background:#efefef"></div>
<svg style="left:40px;top:195.5px" width="11" height="15" viewBox="0 0 11 15"><path d="M1 1L9.8 7.3L1 13.8Z" fill="#f6f6f6" stroke="#3a3a3a" stroke-width="1.3" stroke-linejoin="round"/></svg>
<svg style="left:61px;top:195px" width="16" height="16" viewBox="0 0 16 16"><g fill="#8c8c8c"><circle cx="8" cy="8" r="5.6"/><rect x="6.3" y="0" width="3.4" height="16"/><rect x="0" y="6.3" width="16" height="3.4"/><rect x="6.3" y="0" width="3.4" height="16" transform="rotate(45 8 8)"/><rect x="6.3" y="0" width="3.4" height="16" transform="rotate(-45 8 8)"/></g><circle cx="8" cy="8" r="2.4" fill="#f0f0f0"/></svg>
<div class="t" style="left:91px;top:197.69px;font-size:11px;color:#333;">Document Settings</div>

<div class="a" style="left:58px;top:217px;width:109.7px;height:20px;background:#efefef"></div>
<svg style="left:40px;top:219.5px" width="11" height="15" viewBox="0 0 11 15"><path d="M1 1L9.8 7.3L1 13.8Z" fill="#f6f6f6" stroke="#3a3a3a" stroke-width="1.3" stroke-linejoin="round"/></svg>
<svg style="left:61px;top:220.5px" width="16" height="13" viewBox="0 0 16 13"><path d="M0 0.5H6L7 2H16V12.5H0Z" fill="#8e8e8e"/><path d="M0 3H16" stroke="#a9a9a9" stroke-width="0.6"/></svg>
<div class="t" style="left:91px;top:221.69px;font-size:11px;color:#333;">Named Views</div>

<div class="a" style="left:58px;top:241px;width:96.3px;height:20px;background:#efefef"></div>
<svg style="left:40px;top:243.5px" width="11" height="15" viewBox="0 0 11 15"><path d="M1 1L9.8 7.3L1 13.8Z" fill="#f6f6f6" stroke="#3a3a3a" stroke-width="1.3" stroke-linejoin="round"/></svg>
<svg style="left:60.5px;top:244.5px" width="17" height="13" viewBox="0 0 17 13"><path d="M0.6 6.5Q8.5 -1.5 16.4 6.5Q8.5 14.5 0.6 6.5Z" fill="none" stroke="#9c9c9c" stroke-width="0.9"/><circle cx="8.5" cy="6.5" r="2.8" fill="none" stroke="#9c9c9c" stroke-width="0.9"/><path d="M2.5 0.3L13.6 12.3" stroke="#8a8a8a" stroke-width="0.9"/></svg>
<svg style="left:86px;top:244.5px" width="16" height="13" viewBox="0 0 16 13"><path d="M0 0.5H6L7 2H16V12.5H0Z" fill="#8e8e8e"/><path d="M0 3H16" stroke="#a9a9a9" stroke-width="0.6"/></svg>
<div class="t" style="left:116px;top:245.69px;font-size:11px;color:#333;">Origin</div>

<div class="a" style="left:58px;top:265px;width:100.6px;height:20px;background:#efefef"></div>
<svg style="left:39px;top:269px" width="12" height="12" viewBox="0 0 12 12"><defs><linearGradient id="tg4" x1="0" y1="0" x2="0.3" y2="1"><stop offset="0" stop-color="#fff"/><stop offset="1" stop-color="#555"/></linearGradient></defs><path d="M0.7 11.3L11.3 0.7V11.3Z" fill="url(#tg4)" stroke="#333" stroke-width="0.9" stroke-linejoin="round"/></svg>
<svg style="left:61px;top:269.5px" width="16" height="11" viewBox="0 0 16 11"><path d="M0.5 5.5Q8 -2.5 15.5 5.5Q8 13.5 0.5 5.5Z" fill="#8c8c8c"/><circle cx="8" cy="5.5" r="2.6" fill="#f0f0f0"/><circle cx="8" cy="5.5" r="1.5" fill="#8c8c8c"/></svg>
<svg style="left:86px;top:268.5px" width="16" height="13" viewBox="0 0 16 13"><path d="M0 0.5H6L7 2H16V12.5H0Z" fill="#8e8e8e"/><path d="M0 3H16" stroke="#a9a9a9" stroke-width="0.6"/></svg>
<div class="t" style="left:116px;top:269.69px;font-size:11px;color:#333;">Bodies</div>

<div class="a" style="left:76px;top:289px;width:98.0px;height:20px;background:#efefef"></div>
<svg style="left:78.5px;top:292.5px" width="17" height="13" viewBox="0 0 17 13"><path d="M0.6 6.5Q8.5 -1.5 16.4 6.5Q8.5 14.5 0.6 6.5Z" fill="none" stroke="#9c9c9c" stroke-width="0.9"/><circle cx="8.5" cy="6.5" r="2.8" fill="none" stroke="#9c9c9c" stroke-width="0.9"/><path d="M2.5 0.3L13.6 12.3" stroke="#8a8a8a" stroke-width="0.9"/></svg>
<svg style="left:104px;top:291px" width="17" height="17" viewBox="0 0 17 17"><defs><linearGradient id="bg5" x1="0" y1="0" x2="1" y2="0"><stop offset="0" stop-color="#fdfdfd"/><stop offset="0.6" stop-color="#c9ccd2"/><stop offset="1" stop-color="#e8e8ea"/></linearGradient></defs><rect x="0.7" y="0.7" width="15.3" height="15.3" rx="3.5" fill="url(#bg5)" stroke="#333" stroke-width="1.1"/><path d="M1.5 4.5Q8.3 2.5 15.2 4.5" fill="none" stroke="#fff" stroke-width="1.2"/></svg>
<div class="t" style="left:134px;top:293.69px;font-size:11px;color:#333;">щиток</div>

<div class="a" style="left:76px;top:313px;width:144.3px;height:20px;background:#efefef"></div>
<svg style="left:78.5px;top:316.5px" width="17" height="13" viewBox="0 0 17 13"><path d="M0.6 6.5Q8.5 -1.5 16.4 6.5Q8.5 14.5 0.6 6.5Z" fill="none" stroke="#9c9c9c" stroke-width="0.9"/><circle cx="8.5" cy="6.5" r="2.8" fill="none" stroke="#9c9c9c" stroke-width="0.9"/><path d="M2.5 0.3L13.6 12.3" stroke="#8a8a8a" stroke-width="0.9"/></svg>
<svg style="left:104px;top:315px" width="17" height="17" viewBox="0 0 17 17"><defs><linearGradient id="bg6" x1="0" y1="0" x2="1" y2="0"><stop offset="0" stop-color="#fdfdfd"/><stop offset="0.6" stop-color="#c9ccd2"/><stop offset="1" stop-color="#e8e8ea"/></linearGradient></defs><rect x="0.7" y="0.7" width="15.3" height="15.3" rx="3.5" fill="url(#bg6)" stroke="#333" stroke-width="1.1"/><path d="M1.5 4.5Q8.3 2.5 15.2 4.5" fill="none" stroke="#fff" stroke-width="1.2"/></svg>
<div class="t" style="left:134px;top:317.69px;font-size:11px;color:#333;">крышка короба</div>

<div class="a" style="left:76px;top:337px;width:107.9px;height:20px;background:#efefef"></div>
<svg style="left:78.5px;top:340.5px" width="17" height="13" viewBox="0 0 17 13"><path d="M0.6 6.5Q8.5 -1.5 16.4 6.5Q8.5 14.5 0.6 6.5Z" fill="none" stroke="#9c9c9c" stroke-width="0.9"/><circle cx="8.5" cy="6.5" r="2.8" fill="none" stroke="#9c9c9c" stroke-width="0.9"/><path d="M2.5 0.3L13.6 12.3" stroke="#8a8a8a" stroke-width="0.9"/></svg>
<svg style="left:104px;top:339px" width="17" height="17" viewBox="0 0 17 17"><defs><linearGradient id="bg7" x1="0" y1="0" x2="1" y2="0"><stop offset="0" stop-color="#fdfdfd"/><stop offset="0.6" stop-color="#c9ccd2"/><stop offset="1" stop-color="#e8e8ea"/></linearGradient></defs><rect x="0.7" y="0.7" width="15.3" height="15.3" rx="3.5" fill="url(#bg7)" stroke="#333" stroke-width="1.1"/><path d="M1.5 4.5Q8.3 2.5 15.2 4.5" fill="none" stroke="#fff" stroke-width="1.2"/></svg>
<div class="t" style="left:134px;top:341.69px;font-size:11px;color:#333;">козырек</div>

<div class="a" style="left:76px;top:361px;width:120.8px;height:20px;background:#efefef"></div>
<svg style="left:78.5px;top:364.5px" width="17" height="13" viewBox="0 0 17 13"><path d="M0.6 6.5Q8.5 -1.5 16.4 6.5Q8.5 14.5 0.6 6.5Z" fill="none" stroke="#9c9c9c" stroke-width="0.9"/><circle cx="8.5" cy="6.5" r="2.8" fill="none" stroke="#9c9c9c" stroke-width="0.9"/><path d="M2.5 0.3L13.6 12.3" stroke="#8a8a8a" stroke-width="0.9"/></svg>
<svg style="left:104px;top:363px" width="17" height="17" viewBox="0 0 17 17"><rect x="0.7" y="0.7" width="15.3" height="15.3" rx="3.5" fill="#f59a4a" stroke="#b85c10" stroke-width="1.1"/><path d="M1.5 4.5Q8.3 2.5 15.2 4.5" fill="none" stroke="#ffd2a0" stroke-width="1.2"/><path d="M6 6V16M11 6V16M6 10.5H11" stroke="#fff" stroke-width="1.3"/></svg>
<div class="t" style="left:134px;top:365.69px;font-size:11px;color:#333;">Body10 (1)</div>

<div class="a" style="left:76px;top:385px;width:124.4px;height:20px;background:#efefef"></div>
<svg style="left:78.5px;top:388.5px" width="17" height="13" viewBox="0 0 17 13"><path d="M0.6 6.5Q8.5 -1.5 16.4 6.5Q8.5 14.5 0.6 6.5Z" fill="none" stroke="#9c9c9c" stroke-width="0.9"/><circle cx="8.5" cy="6.5" r="2.8" fill="none" stroke="#9c9c9c" stroke-width="0.9"/><path d="M2.5 0.3L13.6 12.3" stroke="#8a8a8a" stroke-width="0.9"/></svg>
<svg style="left:104px;top:387px" width="17" height="17" viewBox="0 0 17 17"><defs><linearGradient id="bg9" x1="0" y1="0" x2="1" y2="0"><stop offset="0" stop-color="#fdfdfd"/><stop offset="0.6" stop-color="#c9ccd2"/><stop offset="1" stop-color="#e8e8ea"/></linearGradient></defs><rect x="0.7" y="0.7" width="15.3" height="15.3" rx="3.5" fill="url(#bg9)" stroke="#333" stroke-width="1.1"/><path d="M1.5 4.5Q8.3 2.5 15.2 4.5" fill="none" stroke="#fff" stroke-width="1.2"/></svg>
<div class="t" style="left:134px;top:389.69px;font-size:11px;color:#333;">козырек (1)</div>

<div class="a" style="left:76px;top:409px;width:124.4px;height:20px;background:#efefef"></div>
<svg style="left:78.5px;top:412.5px" width="17" height="13" viewBox="0 0 17 13"><path d="M0.6 6.5Q8.5 -1.5 16.4 6.5Q8.5 14.5 0.6 6.5Z" fill="none" stroke="#9c9c9c" stroke-width="0.9"/><circle cx="8.5" cy="6.5" r="2.8" fill="none" stroke="#9c9c9c" stroke-width="0.9"/><path d="M2.5 0.3L13.6 12.3" stroke="#8a8a8a" stroke-width="0.9"/></svg>
<svg style="left:104px;top:411px" width="17" height="17" viewBox="0 0 17 17"><defs><linearGradient id="bg10" x1="0" y1="0" x2="1" y2="0"><stop offset="0" stop-color="#fdfdfd"/><stop offset="0.6" stop-color="#c9ccd2"/><stop offset="1" stop-color="#e8e8ea"/></linearGradient></defs><rect x="0.7" y="0.7" width="15.3" height="15.3" rx="3.5" fill="url(#bg10)" stroke="#333" stroke-width="1.1"/><path d="M1.5 4.5Q8.3 2.5 15.2 4.5" fill="none" stroke="#fff" stroke-width="1.2"/></svg>
<div class="t" style="left:134px;top:413.69px;font-size:11px;color:#333;">козырек (2)</div>

<div class="a" style="left:76px;top:433px;width:124.4px;height:20px;background:#efefef"></div>
<svg style="left:78.5px;top:436.5px" width="17" height="13" viewBox="0 0 17 13"><path d="M0.6 6.5Q8.5 -1.5 16.4 6.5Q8.5 14.5 0.6 6.5Z" fill="none" stroke="#9c9c9c" stroke-width="0.9"/><circle cx="8.5" cy="6.5" r="2.8" fill="none" stroke="#9c9c9c" stroke-width="0.9"/><path d="M2.5 0.3L13.6 12.3" stroke="#8a8a8a" stroke-width="0.9"/></svg>
<svg style="left:104px;top:435px" width="17" height="17" viewBox="0 0 17 17"><defs><linearGradient id="bg11" x1="0" y1="0" x2="1" y2="0"><stop offset="0" stop-color="#fdfdfd"/><stop offset="0.6" stop-color="#c9ccd2"/><stop offset="1" stop-color="#e8e8ea"/></linearGradient></defs><rect x="0.7" y="0.7" width="15.3" height="15.3" rx="3.5" fill="url(#bg11)" stroke="#333" stroke-width="1.1"/><path d="M1.5 4.5Q8.3 2.5 15.2 4.5" fill="none" stroke="#fff" stroke-width="1.2"/></svg>
<div class="t" style="left:134px;top:437.69px;font-size:11px;color:#333;">козырек (3)</div>

<div class="a" style="left:58px;top:457px;width:112.2px;height:20px;background:#efefef"></div>
<svg style="left:39px;top:461px" width="12" height="12" viewBox="0 0 12 12"><defs><linearGradient id="tg12" x1="0" y1="0" x2="0.3" y2="1"><stop offset="0" stop-color="#fff"/><stop offset="1" stop-color="#555"/></linearGradient></defs><path d="M0.7 11.3L11.3 0.7V11.3Z" fill="url(#tg12)" stroke="#333" stroke-width="0.9" stroke-linejoin="round"/></svg>
<svg style="left:61px;top:461.5px" width="16" height="11" viewBox="0 0 16 11"><path d="M0.5 5.5Q8 -2.5 15.5 5.5Q8 13.5 0.5 5.5Z" fill="#8c8c8c"/><circle cx="8" cy="5.5" r="2.6" fill="#f0f0f0"/><circle cx="8" cy="5.5" r="1.5" fill="#8c8c8c"/></svg>
<svg style="left:86px;top:460.5px" width="16" height="13" viewBox="0 0 16 13"><path d="M0 0.5H6L7 2H16V12.5H0Z" fill="#8e8e8e"/><path d="M0 3H16" stroke="#a9a9a9" stroke-width="0.6"/></svg>
<div class="t" style="left:116px;top:461.69px;font-size:11px;color:#333;">Sketches</div>

<div class="a" style="left:76px;top:481px;width:106.7px;height:20px;background:#efefef"></div>
<svg style="left:78.5px;top:484.5px" width="17" height="13" viewBox="0 0 17 13"><path d="M0.6 6.5Q8.5 -1.5 16.4 6.5Q8.5 14.5 0.6 6.5Z" fill="none" stroke="#9c9c9c" stroke-width="0.9"/><circle cx="8.5" cy="6.5" r="2.8" fill="none" stroke="#9c9c9c" stroke-width="0.9"/><path d="M2.5 0.3L13.6 12.3" stroke="#8a8a8a" stroke-width="0.9"/></svg>
<svg style="left:104px;top:483px" width="17" height="17" viewBox="0 0 17 17"><path d="M3.5 1.8H11.8M1.3 4V13M3.5 15.2H8.5M13.9 4V8.5" stroke="#4a4a4a" stroke-width="0.9"/><g fill="#1e88e5"><rect x="0.2" y="0.7" width="2.2" height="2.2"/><rect x="12.9" y="0.7" width="2.2" height="2.2"/><rect x="0.2" y="14.1" width="2.2" height="2.2"/></g><path d="M9 16.6L9.4 13.8L14.2 9L16.4 11.2L11.6 16Z" fill="#f5b54a"/><path d="M14.2 9L16.4 11.2L17 10.5L14.9 8.3Z" fill="#e53935"/><path d="M9 16.5L9.6 14.2L11.1 15.7Z" fill="#555"/></svg>
<div class="t" style="left:134px;top:485.69px;font-size:11px;color:#333;">Sketch1</div>

<div class="a" style="left:76px;top:505px;width:187.1px;height:20px;background:#efefef"></div>
<svg style="left:78.5px;top:508.5px" width="17" height="13" viewBox="0 0 17 13"><path d="M0.6 6.5Q8.5 -1.5 16.4 6.5Q8.5 14.5 0.6 6.5Z" fill="none" stroke="#9c9c9c" stroke-width="0.9"/><circle cx="8.5" cy="6.5" r="2.8" fill="none" stroke="#9c9c9c" stroke-width="0.9"/><path d="M2.5 0.3L13.6 12.3" stroke="#8a8a8a" stroke-width="0.9"/></svg>
<svg style="left:104px;top:507px" width="17" height="17" viewBox="0 0 17 17"><path d="M3.5 1.8H11.8M1.3 4V13M3.5 15.2H8.5M13.9 4V8.5" stroke="#4a4a4a" stroke-width="0.9"/><g fill="#1e88e5"><rect x="0.2" y="0.7" width="2.2" height="2.2"/><rect x="12.9" y="0.7" width="2.2" height="2.2"/><rect x="0.2" y="14.1" width="2.2" height="2.2"/></g><path d="M9 16.6L9.4 13.8L14.2 9L16.4 11.2L11.6 16Z" fill="#f5b54a"/><path d="M14.2 9L16.4 11.2L17 10.5L14.9 8.3Z" fill="#e53935"/><path d="M9 16.5L9.6 14.2L11.1 15.7Z" fill="#555"/></svg>
<div class="t" style="left:134px;top:509.69px;font-size:11px;color:#333;">короб для прожекторов</div>

<div class="a" style="left:76px;top:529px;width:144.3px;height:20px;background:#efefef"></div>
<svg style="left:78.5px;top:532.5px" width="17" height="13" viewBox="0 0 17 13"><path d="M0.6 6.5Q8.5 -1.5 16.4 6.5Q8.5 14.5 0.6 6.5Z" fill="none" stroke="#9c9c9c" stroke-width="0.9"/><circle cx="8.5" cy="6.5" r="2.8" fill="none" stroke="#9c9c9c" stroke-width="0.9"/><path d="M2.5 0.3L13.6 12.3" stroke="#8a8a8a" stroke-width="0.9"/></svg>
<svg style="left:104px;top:531px" width="17" height="17" viewBox="0 0 17 17"><path d="M3.5 1.8H11.8M1.3 4V13M3.5 15.2H8.5M13.9 4V8.5" stroke="#4a4a4a" stroke-width="0.9"/><g fill="#1e88e5"><rect x="0.2" y="0.7" width="2.2" height="2.2"/><rect x="12.9" y="0.7" width="2.2" height="2.2"/><rect x="0.2" y="14.1" width="2.2" height="2.2"/></g><path d="M9 16.6L9.4 13.8L14.2 9L16.4 11.2L11.6 16Z" fill="#f5b54a"/><path d="M14.2 9L16.4 11.2L17 10.5L14.9 8.3Z" fill="#e53935"/><path d="M9 16.5L9.6 14.2L11.1 15.7Z" fill="#555"/></svg>
<div class="t" style="left:134px;top:533.69px;font-size:11px;color:#333;">крышка короба</div>

<div class="a" style="left:76px;top:553px;width:106.7px;height:20px;background:#efefef"></div>
<svg style="left:78.5px;top:556.5px" width="17" height="13" viewBox="0 0 17 13"><path d="M0.6 6.5Q8.5 -1.5 16.4 6.5Q8.5 14.5 0.6 6.5Z" fill="none" stroke="#9c9c9c" stroke-width="0.9"/><circle cx="8.5" cy="6.5" r="2.8" fill="none" stroke="#9c9c9c" stroke-width="0.9"/><path d="M2.5 0.3L13.6 12.3" stroke="#8a8a8a" stroke-width="0.9"/></svg>
<svg style="left:104px;top:555px" width="17" height="17" viewBox="0 0 17 17"><path d="M3.5 1.8H11.8M1.3 4V13M3.5 15.2H8.5M13.9 4V9" stroke="#4a4a4a" stroke-width="0.9"/><g fill="#333"><rect x="0.2" y="0.7" width="2.2" height="2.2"/><rect x="12.9" y="0.7" width="2.2" height="2.2"/><rect x="0.2" y="14.1" width="2.2" height="2.2"/></g><path d="M10.8 11.5V10.3a2.3 2.3 0 0 1 4.6 0V11.5" fill="none" stroke="#d32f2f" stroke-width="1"/><rect x="9.3" y="11.5" width="7.4" height="5.2" fill="#e8a3a3" stroke="#d32f2f" stroke-width="1"/></svg>
<div class="t" style="left:134px;top:557.69px;font-size:11px;color:#333;">Sketch5</div>

<div class="a" style="left:76px;top:577px;width:107.9px;height:20px;background:#efefef"></div>
<svg style="left:78.5px;top:580.5px" width="17" height="13" viewBox="0 0 17 13"><path d="M0.6 6.5Q8.5 -1.5 16.4 6.5Q8.5 14.5 0.6 6.5Z" fill="none" stroke="#9c9c9c" stroke-width="0.9"/><circle cx="8.5" cy="6.5" r="2.8" fill="none" stroke="#9c9c9c" stroke-width="0.9"/><path d="M2.5 0.3L13.6 12.3" stroke="#8a8a8a" stroke-width="0.9"/></svg>
<svg style="left:104px;top:579px" width="17" height="17" viewBox="0 0 17 17"><path d="M3.5 1.8H11.8M1.3 4V13M3.5 15.2H8.5M13.9 4V8.5" stroke="#4a4a4a" stroke-width="0.9"/><g fill="#1e88e5"><rect x="0.2" y="0.7" width="2.2" height="2.2"/><rect x="12.9" y="0.7" width="2.2" height="2.2"/><rect x="0.2" y="14.1" width="2.2" height="2.2"/></g><path d="M9 16.6L9.4 13.8L14.2 9L16.4 11.2L11.6 16Z" fill="#f5b54a"/><path d="M14.2 9L16.4 11.2L17 10.5L14.9 8.3Z" fill="#e53935"/><path d="M9 16.5L9.6 14.2L11.1 15.7Z" fill="#555"/></svg>
<div class="t" style="left:134px;top:581.69px;font-size:11px;color:#333;">козырек</div>

<div class="a" style="left:76px;top:601px;width:112.0px;height:20px;background:#efefef"></div>
<svg style="left:78.5px;top:604.5px" width="17" height="13" viewBox="0 0 17 13"><path d="M0.6 6.5Q8.5 -1.5 16.4 6.5Q8.5 14.5 0.6 6.5Z" fill="none" stroke="#9c9c9c" stroke-width="0.9"/><circle cx="8.5" cy="6.5" r="2.8" fill="none" stroke="#9c9c9c" stroke-width="0.9"/><path d="M2.5 0.3L13.6 12.3" stroke="#8a8a8a" stroke-width="0.9"/></svg>
<svg style="left:104px;top:603px" width="17" height="17" viewBox="0 0 17 17"><path d="M3.5 1.8H11.8M1.3 4V13M3.5 15.2H8.5M13.9 4V8.5" stroke="#4a4a4a" stroke-width="0.9"/><g fill="#1e88e5"><rect x="0.2" y="0.7" width="2.2" height="2.2"/><rect x="12.9" y="0.7" width="2.2" height="2.2"/><rect x="0.2" y="14.1" width="2.2" height="2.2"/></g><path d="M9 16.6L9.4 13.8L14.2 9L16.4 11.2L11.6 16Z" fill="#f5b54a"/><path d="M14.2 9L16.4 11.2L17 10.5L14.9 8.3Z" fill="#e53935"/><path d="M9 16.5L9.6 14.2L11.1 15.7Z" fill="#555"/></svg>
<div class="t" style="left:134px;top:605.69px;font-size:11px;color:#333;">Sketch11</div>

<div class="a" style="left:58px;top:625px;width:133.6px;height:20px;background:#efefef"></div>
<svg style="left:40px;top:627.5px" width="11" height="15" viewBox="0 0 11 15"><path d="M1 1L9.8 7.3L1 13.8Z" fill="#f6f6f6" stroke="#3a3a3a" stroke-width="1.3" stroke-linejoin="round"/></svg>
<svg style="left:60.5px;top:628.5px" width="17" height="13" viewBox="0 0 17 13"><path d="M0.6 6.5Q8.5 -1.5 16.4 6.5Q8.5 14.5 0.6 6.5Z" fill="none" stroke="#9c9c9c" stroke-width="0.9"/><circle cx="8.5" cy="6.5" r="2.8" fill="none" stroke="#9c9c9c" stroke-width="0.9"/><path d="M2.5 0.3L13.6 12.3" stroke="#8a8a8a" stroke-width="0.9"/></svg>
<svg style="left:86px;top:627px" width="17" height="17" viewBox="0 0 17 17"><path d="M1 4.5L4 1.2H15.8V12.6L12.6 15.8H1Z" fill="#e2e3e6" stroke="#333" stroke-width="1"/><path d="M1 4.5H12.6V15.8M12.6 4.5L15.8 1.2" fill="none" stroke="#555" stroke-width="0.8"/><path d="M2 5.5H11.6V14.8H2Z" fill="#f3f3f5"/></svg>
<div class="t" style="left:116px;top:629.69px;font-size:11px;color:#333;">козырек (4):1</div>

<div class="a" style="left:58px;top:649px;width:133.6px;height:20px;background:#efefef"></div>
<svg style="left:40px;top:651.5px" width="11" height="15" viewBox="0 0 11 15"><path d="M1 1L9.8 7.3L1 13.8Z" fill="#f6f6f6" stroke="#3a3a3a" stroke-width="1.3" stroke-linejoin="round"/></svg>
<svg style="left:60.5px;top:652.5px" width="17" height="13" viewBox="0 0 17 13"><path d="M0.6 6.5Q8.5 -1.5 16.4 6.5Q8.5 14.5 0.6 6.5Z" fill="none" stroke="#9c9c9c" stroke-width="0.9"/><circle cx="8.5" cy="6.5" r="2.8" fill="none" stroke="#9c9c9c" stroke-width="0.9"/><path d="M2.5 0.3L13.6 12.3" stroke="#8a8a8a" stroke-width="0.9"/></svg>
<svg style="left:86px;top:651px" width="17" height="17" viewBox="0 0 17 17"><path d="M1 4.5L4 1.2H15.8V12.6L12.6 15.8H1Z" fill="#e2e3e6" stroke="#333" stroke-width="1"/><path d="M1 4.5H12.6V15.8M12.6 4.5L15.8 1.2" fill="none" stroke="#555" stroke-width="0.8"/><path d="M2 5.5H11.6V14.8H2Z" fill="#f3f3f5"/></svg>
<div class="t" style="left:116px;top:653.69px;font-size:11px;color:#333;">козырек (4):2</div>

<div class="a" style="left:58px;top:673px;width:133.6px;height:20px;background:#efefef"></div>
<svg style="left:40px;top:675.5px" width="11" height="15" viewBox="0 0 11 15"><path d="M1 1L9.8 7.3L1 13.8Z" fill="#f6f6f6" stroke="#3a3a3a" stroke-width="1.3" stroke-linejoin="round"/></svg>
<svg style="left:60.5px;top:676.5px" width="17" height="13" viewBox="0 0 17 13"><path d="M0.6 6.5Q8.5 -1.5 16.4 6.5Q8.5 14.5 0.6 6.5Z" fill="none" stroke="#9c9c9c" stroke-width="0.9"/><circle cx="8.5" cy="6.5" r="2.8" fill="none" stroke="#9c9c9c" stroke-width="0.9"/><path d="M2.5 0.3L13.6 12.3" stroke="#8a8a8a" stroke-width="0.9"/></svg>
<svg style="left:86px;top:675px" width="17" height="17" viewBox="0 0 17 17"><path d="M1 4.5L4 1.2H15.8V12.6L12.6 15.8H1Z" fill="#e2e3e6" stroke="#333" stroke-width="1"/><path d="M1 4.5H12.6V15.8M12.6 4.5L15.8 1.2" fill="none" stroke="#555" stroke-width="0.8"/><path d="M2 5.5H11.6V14.8H2Z" fill="#f3f3f5"/></svg>
<div class="t" style="left:116px;top:677.69px;font-size:11px;color:#333;">козырек (4):3</div>

<div class="a" style="left:58px;top:697px;width:130.2px;height:20px;background:#efefef"></div>
<svg style="left:40px;top:699.5px" width="11" height="15" viewBox="0 0 11 15"><path d="M1 1L9.8 7.3L1 13.8Z" fill="#f6f6f6" stroke="#3a3a3a" stroke-width="1.3" stroke-linejoin="round"/></svg>
<svg style="left:61px;top:701.5px" width="16" height="11" viewBox="0 0 16 11"><path d="M0.5 5.5Q8 -2.5 15.5 5.5Q8 13.5 0.5 5.5Z" fill="#8c8c8c"/><circle cx="8" cy="5.5" r="2.6" fill="#f0f0f0"/><circle cx="8" cy="5.5" r="1.5" fill="#8c8c8c"/></svg>
<svg style="left:86px;top:699px" width="17" height="17" viewBox="0 0 17 17"><path d="M1 4.5L4 1.2H15.8V12.6L12.6 15.8H1Z" fill="#e2e3e6" stroke="#333" stroke-width="1"/><path d="M1 4.5H12.6V15.8M12.6 4.5L15.8 1.2" fill="none" stroke="#555" stroke-width="0.8"/><path d="M2 5.5H11.6V14.8H2Z" fill="#f3f3f5"/></svg>
<div class="t" style="left:116px;top:701.69px;font-size:11px;color:#333;">головка 3х:1</div>

<!-- 60_bottom.py -->
<div class="a" style="left:4px;top:1079px;width:300px;height:25px;background:#f0f0f0;border:1px solid #cdcdcd;box-sizing:border-box"></div>
<div class="t" style="left:29.4px;top:1085.99px;font-size:11px;color:#555;letter-spacing:-1.109px;">COMMENTS</div>

<svg style="left:283px;top:1086px" width="10" height="10" viewBox="0 0 10 10"><circle cx="4.8" cy="4.8" r="4.7" fill="#222"/><path d="M2.2 4.85H7.4M4.8 2.25V7.45" stroke="#fff" stroke-width="1.6"/></svg>
<div class="a" style="left:299px;top:1085px;width:1px;height:11px;background:#888"></div><div class="a" style="left:301px;top:1086px;width:1px;height:9px;background:#bbb"></div>
<div class="a" style="left:841px;top:1080px;width:236px;height:24px;background:rgba(240,240,240,0.95)"></div>
<svg style="left:841px;top:1080px" width="240" height="24" viewBox="0 0 240 24">
<g stroke="#222" fill="none" stroke-width="1">
<path d="M6 11.5Q3 14 8 15.5Q13 17 18.5 14.5Q21 12 16 10.5"/>
</g>
<path d="M11 4L13.5 7H12.2V20H9.8V7H8.5Z" fill="#fff" stroke="#222" stroke-width="0.8"/>
<path d="M3.5 15.5L7 13V18Z" fill="#222"/>
<path d="M24 10h6l-3 4z" fill="#222"/>
<path d="M37 8.5H51.5V19.5H37Z" fill="#f4f4f4" stroke="#333" stroke-width="1"/>
<path d="M37.5 8.5L41 4.5H44L45 6.5L48 4.2L50 6V8.5" fill="#9a9a9a" stroke="#555" stroke-width="0.6"/>
<rect x="40" y="12.2" width="8.6" height="3.6" fill="#aaa" stroke="#333" stroke-width="0.7"/>
<g transform="translate(3 0)"><path d="M65 19.5Q61 17.5 59.5 14Q59 12.5 60.5 12.8L63 15V7.3Q63 6 64.2 6.2Q65.2 6.4 65.2 7.3V12V5.3Q65.3 4 66.5 4.2Q67.6 4.4 67.6 5.5V11.5V5.5Q67.7 4.3 68.9 4.5Q70 4.7 70 5.9V12V7.4Q70.2 6.2 71.2 6.4Q72.3 6.7 72.3 7.8V14Q72 18 70 19.5Z" fill="#f6f6f6" stroke="#333" stroke-width="0.8"/></g>
<circle cx="93" cy="12.5" r="4.6" fill="#e6f2f4" stroke="#333" stroke-width="1.1"/>
<path d="M96.3 15.8L99.7 19.2" stroke="#333" stroke-width="2.4" stroke-linecap="round"/>
<path d="M98.5 6.3H103.5M101 3.8V8.8M98.5 10.3H103.5" stroke="#333" stroke-width="0.8"/>
<rect x="114" y="4.5" width="15" height="15" fill="none" stroke="#555" stroke-width="0.7" stroke-dasharray="1.2 1.2"/>
<circle cx="121" cy="11.5" r="5.6" fill="#e6f2f4" stroke="#333" stroke-width="1.1"/>
<path d="M125 15.5L129 19.5" stroke="#333" stroke-width="2.4" stroke-linecap="round"/>
<path d="M135 10h6l-3 4z" fill="#222"/>
<rect x="147.5" y="5.2" width="15.2" height="11.8" rx="1.2" fill="#eee" stroke="#444" stroke-width="0.9"/>
<rect x="150" y="7.5" width="10.2" height="7.2" fill="#8fb1de" stroke="#2b4f8c" stroke-width="0.8"/>
<path d="M152.5 17V19.5H157.5V17" fill="#ddd" stroke="#444" stroke-width="0.7"/>
<path d="M165.5 10h6l-3 4z" fill="#222"/>
<rect x="178.5" y="4.5" width="15.5" height="15" fill="#777" stroke="#444" stroke-width="0.8" rx="1"/>
<g fill="#f3f3f3"><rect x="180" y="6" width="2.6" height="2.5"/><rect x="183.8" y="6" width="2.6" height="2.5"/><rect x="187.6" y="6" width="2.6" height="2.5"/><rect x="191.2" y="6" width="1.6" height="2.5"/>
<rect x="180" y="9.7" width="2.6" height="2.5"/><rect x="183.8" y="9.7" width="2.6" height="2.5"/><rect x="187.6" y="9.7" width="2.6" height="2.5"/><rect x="191.2" y="9.7" width="1.6" height="2.5"/>
<rect x="180" y="13.4" width="2.6" height="2.5"/><rect x="183.8" y="13.4" width="2.6" height="2.5"/><rect x="187.6" y="13.4" width="2.6" height="2.5"/><rect x="191.2" y="13.4" width="1.6" height="2.5"/>
<rect x="180" y="17" width="2.6" height="1.5"/><rect x="183.8" y="17" width="2.6" height="1.5"/><rect x="187.6" y="17" width="2.6" height="1.5"/></g>
<path d="M197 10h6l-3 4z" fill="#222"/>
<rect x="209.2" y="5.2" width="14.8" height="14" rx="1" fill="#3d5c9a"/>
<g fill="#9bb8e3"><rect x="210.6" y="6.6" width="5.5" height="5"/><rect x="217.3" y="6.6" width="5.5" height="5"/><rect x="210.6" y="12.8" width="5.5" height="5"/><rect x="217.3" y="12.8" width="5.5" height="5"/></g>
<path d="M228 10h6l-3 4z" fill="#222"/>
</svg>
<div class="a" style="left:0;top:1108px;width:1875px;height:46px;background:#f0f0f0;border-top:2px solid #c9c9c9;box-sizing:border-box"></div>
<svg style="left:0;top:1108px" width="140" height="46" viewBox="0 0 140 46">
<g fill="#3a3a3a">
<rect x="10.6" y="19" width="2" height="14"/><path d="M23 19V33L13.5 26Z"/>
<path d="M44 19V33L35 26Z"/><rect x="45" y="22.5" width="2.4" height="7"/>
<path d="M60.6 19V33L73 26Z"/>
<rect x="85" y="22.5" width="2.4" height="7"/><path d="M88.5 19V33L97.5 26Z"/>
<path d="M111 19V33L120.5 26Z"/><rect x="121.2" y="19" width="2" height="14"/>
</g></svg>
<svg style="left:0;top:1108px" width="1875" height="46" viewBox="0 1108 1875 46"><rect x="430" y="1121" width="24" height="24" rx="2" fill="#e4e41a"/><path d="M153.2 1150H778.5" stroke="#c6c6c6" stroke-width="2.4"/><path d="M154.0 1144.3V1150 M178.0 1144.3V1150 M202.0 1144.3V1150 M226.0 1144.3V1150 M250.0 1144.3V1150 M274.0 1144.3V1150 M298.0 1144.3V1150 M322.0 1144.3V1150 M346.0 1144.3V1150 M370.0 1144.3V1150 M394.0 1144.3V1150 M418.0 1144.3V1150 M442.0 1144.3V1150 M466.0 1144.3V1150 M490.0 1144.3V1150 M514.0 1144.3V1150 M538.0 1144.3V1150 M562.0 1144.3V1150 M586.0 1144.3V1150 M610.0 1144.3V1150 M634.0 1144.3V1150 M658.0 1144.3V1150 M682.0 1144.3V1150 M706.0 1144.3V1150 M730.0 1144.3V1150 M754.0 1144.3V1150 M778.0 1144.3V1150" stroke="#c6c6c6" stroke-width="1.6"/><g transform="translate(146 1125)"><path d="M3 1.5H12M1.5 3V12.5M3 14.5H8M13.5 3V8" stroke="#3a3a3a" stroke-width="1" shape-rendering="crispEdges"/><g fill="#1e88e5"><rect x="0" y="0" width="2.2" height="2.2"/><rect x="12.6" y="0" width="2.2" height="2.2"/><rect x="0" y="13" width="2.2" height="2.2"/></g><path d="M8.5 16L9.3 13.2L14 8.5L16 10.5L11.3 15.2Z" fill="#f5b54a"/><path d="M14 8.5L16 10.5L16.7 9.8L14.7 7.8Z" fill="#e53935"/><path d="M8.5 16L9.3 13.2L11.3 15.2Z" fill="#555"/></g><g transform="translate(170 1125)"><path d="M1 3L3.6 0H12.3L9.7 3Z" fill="#8ccbf5"/><path d="M1 3H9.7V12.5H1Z" fill="#6aaee3"/><path d="M9.7 3L12.3 0V9.6L9.7 12.5Z" fill="#4a94d0"/><path d="M1 12.5H9.7L12.3 9.6V12.5L9.7 15.3H1Z" fill="#c2c2c2"/><path d="M1 12.5H9.7L12.3 9.6V10.6L9.7 13.5H1Z" fill="#e6e6e6"/><path d="M14.5 13V2" stroke="#222" stroke-width="1"/><path d="M13 3.3L14.5 0.5L16 3.3Z" fill="#222"/></g><g transform="translate(194 1125)"><path d="M3 1.5H12M1.5 3V12.5M3 14.5H8M13.5 3V8" stroke="#3a3a3a" stroke-width="1" shape-rendering="crispEdges"/><g fill="#1e88e5"><rect x="0" y="0" width="2.2" height="2.2"/><rect x="12.6" y="0" width="2.2" height="2.2"/><rect x="0" y="13" width="2.2" height="2.2"/></g><path d="M8.5 16L9.3 13.2L14 8.5L16 10.5L11.3 15.2Z" fill="#f5b54a"/><path d="M14 8.5L16 10.5L16.7 9.8L14.7 7.8Z" fill="#e53935"/><path d="M8.5 16L9.3 13.2L11.3 15.2Z" fill="#555"/></g><g transform="translate(218 1125)"><path d="M1 3L3.6 0H12.3L9.7 3Z" fill="#8ccbf5"/><path d="M1 3H9.7V12.5H1Z" fill="#6aaee3"/><path d="M9.7 3L12.3 0V9.6L9.7 12.5Z" fill="#4a94d0"/><path d="M1 12.5H9.7L12.3 9.6V12.5L9.7 15.3H1Z" fill="#c2c2c2"/><path d="M1 12.5H9.7L12.3 9.6V10.6L9.7 13.5H1Z" fill="#e6e6e6"/><path d="M14.5 13V2" stroke="#222" stroke-width="1"/><path d="M13 3.3L14.5 0.5L16 3.3Z" fill="#222"/></g><g transform="translate(242 1125)"><path d="M3 1.5H12M1.5 3V12.5M3 14.5H8M13.5 3V8" stroke="#3a3a3a" stroke-width="1" shape-rendering="crispEdges"/><g fill="#1e88e5"><rect x="0" y="0" width="2.2" height="2.2"/><rect x="12.6" y="0" width="2.2" height="2.2"/><rect x="0" y="13" width="2.2" height="2.2"/></g><path d="M8.5 16L9.3 13.2L14 8.5L16 10.5L11.3 15.2Z" fill="#f5b54a"/><path d="M14 8.5L16 10.5L16.7 9.8L14.7 7.8Z" fill="#e53935"/><path d="M8.5 16L9.3 13.2L11.3 15.2Z" fill="#555"/></g><g transform="translate(266 1125)"><path d="M1 3L3.6 0H12.3L9.7 3Z" fill="#8ccbf5"/><path d="M1 3H9.7V12.5H1Z" fill="#6aaee3"/><path d="M9.7 3L12.3 0V9.6L9.7 12.5Z" fill="#4a94d0"/><path d="M1 12.5H9.7L12.3 9.6V12.5L9.7 15.3H1Z" fill="#c2c2c2"/><path d="M1 12.5H9.7L12.3 9.6V10.6L9.7 13.5H1Z" fill="#e6e6e6"/><path d="M14.5 13V2" stroke="#222" stroke-width="1"/><path d="M13 3.3L14.5 0.5L16 3.3Z" fill="#222"/></g><g transform="translate(290 1125)"><path d="M1 3L3.6 0H12.3L9.7 3Z" fill="#8ccbf5"/><path d="M1 3H9.7V12.5H1Z" fill="#6aaee3"/><path d="M9.7 3L12.3 0V9.6L9.7 12.5Z" fill="#4a94d0"/><path d="M1 12.5H9.7L12.3 9.6V12.5L9.7 15.3H1Z" fill="#c2c2c2"/><path d="M1 12.5H9.7L12.3 9.6V10.6L9.7 13.5H1Z" fill="#e6e6e6"/><path d="M14.5 13V2" stroke="#222" stroke-width="1"/><path d="M13 3.3L14.5 0.5L16 3.3Z" fill="#222"/></g><g transform="translate(314 1125)"><path d="M8 2.5V12.5M3 7.5H13" stroke="#2a2a2a" stroke-width="1.6"/><path d="M8 0L10.6 3.6H5.4Z M8 15L10.6 11.4H5.4Z M0.5 7.5L4 5V10Z M15.5 7.5L12 5V10Z" fill="#2a2a2a"/></g><g transform="translate(338 1125)"><path d="M1 8L3 6H7V8Z" fill="#8ccbf5"/><path d="M1 8H10V15.5H1Z" fill="#6aaee3"/><path d="M10 11.5L12 9.5V13.5L10 15.5Z" fill="#4a94d0"/><path d="M5.5 3L7.5 0.5H16L14 3Z" fill="#8ccbf5"/><path d="M5.5 3H14V11.5H5.5Z" fill="#6aaee3"/><path d="M14 3L16 0.5V9.5L14 11.5Z" fill="#4a94d0"/></g><g transform="translate(362 1125)"><path d="M1 8L3 6H7V8Z" fill="#8ccbf5"/><path d="M1 8H10V15.5H1Z" fill="#6aaee3"/><path d="M10 11.5L12 9.5V13.5L10 15.5Z" fill="#4a94d0"/><path d="M5.5 3L7.5 0.5H16L14 3Z" fill="#8ccbf5"/><path d="M5.5 3H14V11.5H5.5Z" fill="#6aaee3"/><path d="M14 3L16 0.5V9.5L14 11.5Z" fill="#4a94d0"/></g><g transform="translate(386 1125)"><path d="M8 2.5V12.5M3 7.5H13" stroke="#2a2a2a" stroke-width="1.6"/><path d="M8 0L10.6 3.6H5.4Z M8 15L10.6 11.4H5.4Z M0.5 7.5L4 5V10Z M15.5 7.5L12 5V10Z" fill="#2a2a2a"/></g><g transform="translate(410 1125)"><path d="M8 2.5V12.5M3 7.5H13" stroke="#2a2a2a" stroke-width="1.6"/><path d="M8 0L10.6 3.6H5.4Z M8 15L10.6 11.4H5.4Z M0.5 7.5L4 5V10Z M15.5 7.5L12 5V10Z" fill="#2a2a2a"/></g><g transform="translate(434 1125)"><path d="M3 1.5H12M1.5 3V12.5M3 14.5H8M13.5 3V8" stroke="#3a3a3a" stroke-width="1" shape-rendering="crispEdges"/><g fill="#1e88e5"><rect x="0" y="0" width="2.2" height="2.2"/><rect x="12.6" y="0" width="2.2" height="2.2"/><rect x="0" y="13" width="2.2" height="2.2"/></g><path d="M8.5 16L9.3 13.2L14 8.5L16 10.5L11.3 15.2Z" fill="#f5b54a"/><path d="M14 8.5L16 10.5L16.7 9.8L14.7 7.8Z" fill="#e53935"/><path d="M8.5 16L9.3 13.2L11.3 15.2Z" fill="#555"/></g><g transform="translate(458 1125)"><path d="M0.5 0.5H15.5L12 11H4Z" fill="#8ccbf5"/><path d="M0.5 0.5L4 11V13L0.5 8Z" fill="#4a94d0"/><path d="M15.5 0.5L12 11V13L15.5 8Z" fill="#4a94d0"/><circle cx="8" cy="12" r="3.6" fill="#fafafa" stroke="#444" stroke-width="0.9"/></g><g transform="translate(482 1125)"><path d="M3 1.5H12M1.5 3V12.5M3 14.5H8M13.5 3V8" stroke="#3a3a3a" stroke-width="1" shape-rendering="crispEdges"/><g fill="#1e88e5"><rect x="0" y="0" width="2.2" height="2.2"/><rect x="12.6" y="0" width="2.2" height="2.2"/><rect x="0" y="13" width="2.2" height="2.2"/></g><path d="M8.5 16L9.3 13.2L14 8.5L16 10.5L11.3 15.2Z" fill="#f5b54a"/><path d="M14 8.5L16 10.5L16.7 9.8L14.7 7.8Z" fill="#e53935"/><path d="M8.5 16L9.3 13.2L11.3 15.2Z" fill="#555"/></g><g transform="translate(506 1125)"><path d="M1 3L3.6 0H12.3L9.7 3Z" fill="#8ccbf5"/><path d="M1 3H9.7V12.5H1Z" fill="#6aaee3"/><path d="M9.7 3L12.3 0V9.6L9.7 12.5Z" fill="#4a94d0"/><path d="M1 12.5H9.7L12.3 9.6V12.5L9.7 15.3H1Z" fill="#c2c2c2"/><path d="M1 12.5H9.7L12.3 9.6V10.6L9.7 13.5H1Z" fill="#e6e6e6"/><path d="M14.5 13V2" stroke="#222" stroke-width="1"/><path d="M13 3.3L14.5 0.5L16 3.3Z" fill="#222"/></g><g transform="translate(530 1125)"><path d="M3 1.5H12M1.5 3V12.5M3 14.5H8M13.5 3V8" stroke="#3a3a3a" stroke-width="1" shape-rendering="crispEdges"/><g fill="#1e88e5"><rect x="0" y="0" width="2.2" height="2.2"/><rect x="12.6" y="0" width="2.2" height="2.2"/><rect x="0" y="13" width="2.2" height="2.2"/></g><path d="M8.5 16L9.3 13.2L14 8.5L16 10.5L11.3 15.2Z" fill="#f5b54a"/><path d="M14 8.5L16 10.5L16.7 9.8L14.7 7.8Z" fill="#e53935"/><path d="M8.5 16L9.3 13.2L11.3 15.2Z" fill="#555"/></g><g transform="translate(554 1125)"><path d="M1 3L3.6 0H12.3L9.7 3Z" fill="#fbc79a"/><path d="M1 3H9.7V12.5H1Z" fill="#f5a46a"/><path d="M9.7 3L12.3 0V9.6L9.7 12.5Z" fill="#e0884a"/><path d="M1 12.5H9.7L12.3 9.6V12.5L9.7 15.3H1Z" fill="#c2c2c2"/><path d="M1 12.5H9.7L12.3 9.6V10.6L9.7 13.5H1Z" fill="#e6e6e6"/><path d="M14.5 13V2" stroke="#222" stroke-width="1"/><path d="M13 3.3L14.5 0.5L16 3.3Z" fill="#222"/></g><g transform="translate(578 1125)"><path d="M1 3L3.5 0.5H13L10.5 3Z" fill="#8ccbf5"/><path d="M1 3H10.5V7.5H1Z" fill="#6aaee3"/><path d="M10.5 3L13 0.5V5L10.5 7.5Z" fill="#4a94d0"/><path d="M0 9.5H11L14 6.5" stroke="#1e88e5" stroke-width="1" fill="none"/><path d="M1 10.5H11V15.3H1Z" fill="#d9d9d9"/><path d="M11 10.5L13 8.5V13.3L11 15.3Z" fill="#bbb"/><path d="M1 10.5V15.3H11L13 13.3V8.5" fill="none" stroke="#555" stroke-width="0.8"/></g><g transform="translate(602 1125)"><rect x="0.5" y="0.5" width="7.3" height="7" rx="2" fill="#dadada" stroke="#555" stroke-width="0.8"/><path d="M1.5 10V12.3H5.5" stroke="#222" stroke-width="1" fill="none"/><path d="M5 10.5L7.3 12.3L5 14Z" fill="#222"/><path d="M8 9L9.5 7.8H15.8L14.3 9Z" fill="#8ccbf5"/><path d="M8 9H14.3V15.7H8Z" fill="#6aaee3"/><path d="M14.3 9L15.8 7.8V14.3L14.3 15.7Z" fill="#4a94d0"/></g><g transform="translate(626 1125)"><rect x="0.5" y="0.5" width="6.5" height="15" fill="#fafafa" stroke="#444" stroke-width="0.9"/><rect x="7" y="0" width="9" height="6.5" fill="#65aee6" stroke="#3d8fcf" stroke-width="0.5"/></g><g transform="translate(650 1125)"><rect x="0.5" y="0.5" width="7.3" height="7" rx="2" fill="#dadada" stroke="#555" stroke-width="0.8"/><path d="M1.5 10V12.3H5.5" stroke="#222" stroke-width="1" fill="none"/><path d="M5 10.5L7.3 12.3L5 14Z" fill="#222"/><path d="M8.5 9.5L10 8H15.5V14L14 15.5H8.5Z" fill="#dadada" stroke="#555" stroke-width="0.8" stroke-linejoin="round"/></g><g transform="translate(674 1125)"><rect x="0.5" y="0.5" width="6.5" height="15" fill="#fafafa" stroke="#444" stroke-width="0.9"/><rect x="7" y="0" width="9" height="6.5" fill="#65aee6" stroke="#3d8fcf" stroke-width="0.5"/></g><g transform="translate(698 1125)"><rect x="0.5" y="0.5" width="7.3" height="7" rx="2" fill="#dadada" stroke="#555" stroke-width="0.8"/><path d="M1.5 10V12.3H5.5" stroke="#222" stroke-width="1" fill="none"/><path d="M5 10.5L7.3 12.3L5 14Z" fill="#222"/><path d="M8.5 9.5L10 8H15.5V14L14 15.5H8.5Z" fill="#dadada" stroke="#555" stroke-width="0.8" stroke-linejoin="round"/></g><g transform="translate(722 1125)"><path d="M0.5 4L3.8 0.5H15.5V12.2L12.2 15.5H0.5Z" fill="#d6d6d6" stroke="#555" stroke-width="0.9"/><path d="M12.2 4V15.5M0.5 4H12.2L15.5 0.5" fill="none" stroke="#777" stroke-width="0.6"/><path d="M12.2 4L15.5 0.5V12.2L12.2 15.5Z" fill="#bdbdbd"/></g><g transform="translate(746 1125)"><path d="M1 8L3 6H7V8Z" fill="#8ccbf5"/><path d="M1 8H10V15.5H1Z" fill="#6aaee3"/><path d="M10 11.5L12 9.5V13.5L10 15.5Z" fill="#4a94d0"/><path d="M5.5 3L7.5 0.5H16L14 3Z" fill="#8ccbf5"/><path d="M5.5 3H14V11.5H5.5Z" fill="#6aaee3"/><path d="M14 3L16 0.5V9.5L14 11.5Z" fill="#4a94d0"/></g><g transform="translate(770 1125)"><path d="M1 3L3.6 0H12.3L9.7 3Z" fill="#e2eef8"/><path d="M1 3H9.7V12.5H1Z" fill="#d5e6f3"/><path d="M9.7 3L12.3 0V9.6L9.7 12.5Z" fill="#c8dcee"/><path d="M1 12.5H9.7L12.3 9.6V12.5L9.7 15.3H1Z" fill="#e8e8e8"/><path d="M1 12.5H9.7L12.3 9.6V10.6L9.7 13.5H1Z" fill="#e6e6e6"/><path d="M14.5 13V2" stroke="#c8c8c8" stroke-width="1"/><path d="M13 3.3L14.5 0.5L16 3.3Z" fill="#c8c8c8"/></g><path d="M760.2 1119H772V1123L767 1127.5V1150.5H765V1127.5L760.2 1123Z" fill="#555"/></svg>
</body></html>
